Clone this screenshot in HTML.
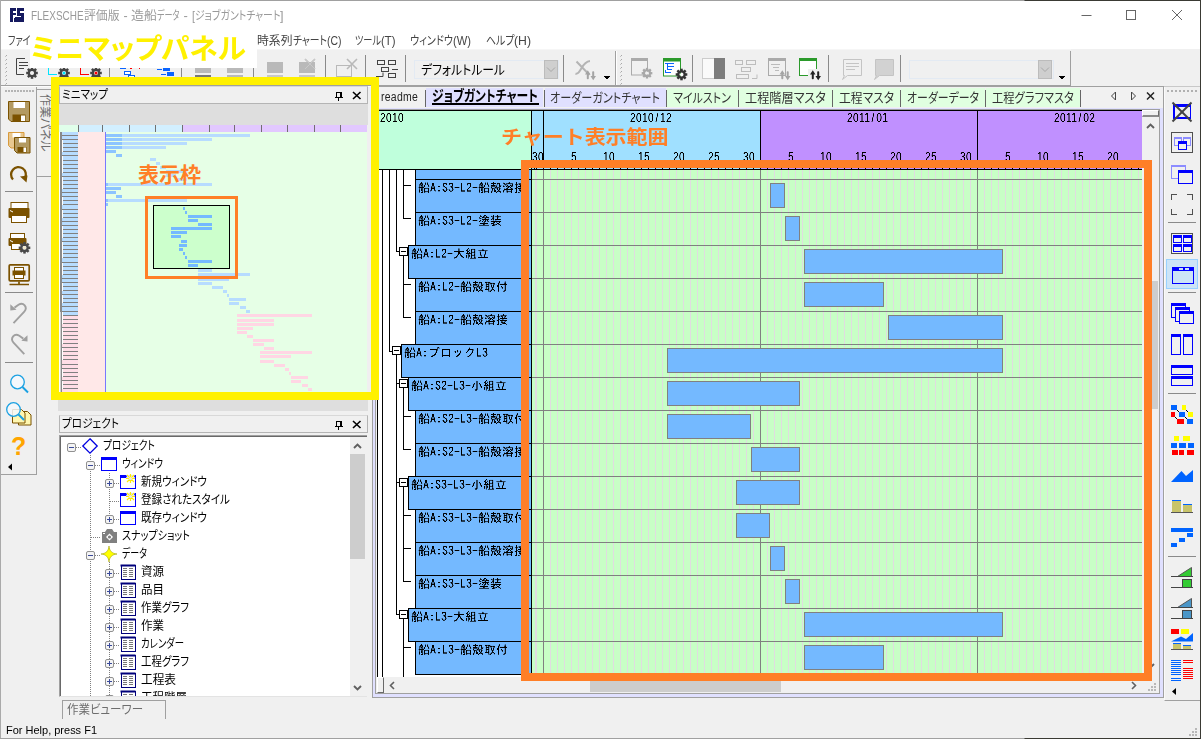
<!DOCTYPE html>
<html lang="ja"><head><meta charset="utf-8"><title>FLEXSCHE</title>
<style>
html,body{margin:0;padding:0;}
body{width:1201px;height:739px;overflow:hidden;background:#f0f0f0;position:relative;font-family:"Liberation Sans","Noto Sans CJK JP",sans-serif;}
#root{position:absolute;left:0;top:0;width:1201px;height:739px;overflow:hidden;}
#root div,#root span,#root svg{position:absolute;}
#root svg{overflow:visible;}
.t{white-space:nowrap;transform-origin:0 0;font-family:"Liberation Sans","Noto Sans CJK JP",sans-serif;font-feature-settings:"palt";}
.m{white-space:nowrap;font-family:"IPAGothic","Liberation Mono",monospace;font-size:12px;line-height:12px;}
#root .m .hw{position:static;}
#root .r{position:static;display:inline-block;transform-origin:0 0;white-space:pre;vertical-align:top;}
.d{white-space:nowrap;font-family:"Liberation Sans",sans-serif;font-size:12px;line-height:13px;letter-spacing:.39px;transform:scaleX(.85);transform-origin:0 0;color:#000;}
#root .d .sl{position:static;padding:0 1.600px;}
.fr{position:absolute;pointer-events:none;}
</style></head>
<body><svg width="0" height="0" style="position:absolute"><filter id="c1" color-interpolation-filters="sRGB"><feComponentTransfer><feFuncA type="linear" slope="2.600" intercept="-0.600"/></feComponentTransfer></filter><filter id="c2" color-interpolation-filters="sRGB"><feComponentTransfer><feFuncA type="linear" slope="2.400" intercept="-0.550"/></feComponentTransfer></filter></svg><div id="root">
<div style="left:0px;top:0px;width:1201px;height:49px;background:#fff;"></div>
<svg style="left:10px;top:8px" width="14" height="14" viewBox="0 0 14 14" shape-rendering="crispEdges">
<rect x="0" y="0" width="14" height="14" fill="#15195f"/>
<rect x="6" y="0" width="1" height="9" fill="#fff"/>
<rect x="3" y="3" width="3" height="2" fill="#fff"/>
<rect x="3" y="7" width="3" height="2" fill="#fff"/>
<rect x="3" y="9" width="1" height="5" fill="#fff"/>
<rect x="10" y="3" width="4" height="2" fill="#fff"/>
<rect x="7" y="8" width="4" height="1" fill="#fff"/>
<rect x="4" y="9" width="1" height="1" fill="#fff"/>
</svg>
<span class="t" style="left:31px;top:8px;font-size:12px;line-height:16px;color:#999;white-space:pre;"><span id="title_0" class="r" style="width:52.50px;transform:scaleX(0.829);">FLEXSCHE</span><span id="title_1" class="r" style="width:35.50px;transform:scaleX(0.986);">評価版</span><span id="title_2" class="r" style="margin-left:0.50px;width:11.00px;transform:scaleX(1.031);"> - </span><span id="title_3" class="r" style="width:26.00px;transform:scaleX(1.083);">造船</span><span id="title_4" class="r" style="width:22.50px;transform:scaleX(0.671);">データ</span><span id="title_5" class="r" style="margin-left:0.50px;width:11.50px;transform:scaleX(1.078);"> - </span><span id="title_6" class="r" style="margin-left:0.50px;width:3.00px;transform:scaleX(0.897);">[</span><span id="title_7" class="r" style="width:85.50px;transform:scaleX(0.820);">ジョブガントチャート</span><span id="title_8" class="r" style="width:3.50px;transform:scaleX(1.047);">]</span></span>
<svg style="left:1075px;top:5px" width="120" height="20" viewBox="0 0 120 20">
<path d="M6.5 10.5h10" stroke="#666" stroke-width="1" fill="none"/>
<rect x="51.5" y="5.500" width="9" height="9" stroke="#666" stroke-width="1" fill="none"/>
<path d="M97 5l10 10M107 5l-10 10" stroke="#666" stroke-width="1" fill="none"/>
</svg>
<span class="t" style="left:8px;top:33px;font-size:12px;line-height:16px;color:#444;"><span id="m1_0" class="r" style="width:22.50px;transform:scaleX(0.742);">ファイ</span><span id="m1_1" class="r" style="width:23.50px;transform:scaleX(0.885);">ル(F)</span></span>
<span class="t" style="left:257px;top:33px;font-size:12px;line-height:16px;color:#444;"><span id="m5_0" class="r" style="width:35.50px;transform:scaleX(0.986);">時系列</span><span id="m5_1" class="r" style="width:34.00px;transform:scaleX(0.815);">チャート</span><span id="m5_2" class="r" style="width:14.50px;transform:scaleX(0.870);">(C)</span></span>
<span class="t" style="left:355px;top:33px;font-size:12px;line-height:16px;color:#444;"><span id="m6_0" class="r" style="width:26.00px;transform:scaleX(0.763);">ツール</span><span id="m6_1" class="r" style="width:14.50px;transform:scaleX(0.946);">(T)</span></span>
<span class="t" style="left:410px;top:33px;font-size:12px;line-height:16px;color:#444;"><span id="m7_0" class="r" style="width:43.00px;transform:scaleX(0.842);">ウィンドウ</span><span id="m7_1" class="r" style="width:18.00px;transform:scaleX(0.931);">(W)</span></span>
<span class="t" style="left:485.5px;top:33px;font-size:12px;line-height:16px;color:#444;"><span id="m8_0" class="r" style="width:28.50px;transform:scaleX(0.828);">ヘルプ</span><span id="m8_1" class="r" style="width:17.00px;transform:scaleX(1.020);">(H)</span></span>
<div style="left:0px;top:85px;width:1071px;height:1px;background:#a0a0a0;"></div>
<div style="left:0px;top:86px;width:1201px;height:1px;background:#fbfbfb;"></div>
<div style="left:1071px;top:86px;width:130px;height:1px;background:#c8c8c8;"></div>
<svg style="left:5px;top:55px" width="2" height="30" shape-rendering="crispEdges"><rect x="1" y="0" width="1" height="1" fill="#a8a8a8"/><rect x="0" y="1" width="1" height="1" fill="#c4c4c4"/><rect x="1" y="4" width="1" height="1" fill="#a8a8a8"/><rect x="0" y="5" width="1" height="1" fill="#c4c4c4"/><rect x="1" y="8" width="1" height="1" fill="#a8a8a8"/><rect x="0" y="9" width="1" height="1" fill="#c4c4c4"/><rect x="1" y="12" width="1" height="1" fill="#a8a8a8"/><rect x="0" y="13" width="1" height="1" fill="#c4c4c4"/><rect x="1" y="16" width="1" height="1" fill="#a8a8a8"/><rect x="0" y="17" width="1" height="1" fill="#c4c4c4"/><rect x="1" y="20" width="1" height="1" fill="#a8a8a8"/><rect x="0" y="21" width="1" height="1" fill="#c4c4c4"/><rect x="1" y="24" width="1" height="1" fill="#a8a8a8"/><rect x="0" y="25" width="1" height="1" fill="#c4c4c4"/><rect x="1" y="28" width="1" height="1" fill="#a8a8a8"/><rect x="0" y="29" width="1" height="1" fill="#c4c4c4"/></svg>
<svg style="left:620px;top:55px" width="2" height="30" shape-rendering="crispEdges"><rect x="1" y="0" width="1" height="1" fill="#a8a8a8"/><rect x="0" y="1" width="1" height="1" fill="#c4c4c4"/><rect x="1" y="4" width="1" height="1" fill="#a8a8a8"/><rect x="0" y="5" width="1" height="1" fill="#c4c4c4"/><rect x="1" y="8" width="1" height="1" fill="#a8a8a8"/><rect x="0" y="9" width="1" height="1" fill="#c4c4c4"/><rect x="1" y="12" width="1" height="1" fill="#a8a8a8"/><rect x="0" y="13" width="1" height="1" fill="#c4c4c4"/><rect x="1" y="16" width="1" height="1" fill="#a8a8a8"/><rect x="0" y="17" width="1" height="1" fill="#c4c4c4"/><rect x="1" y="20" width="1" height="1" fill="#a8a8a8"/><rect x="0" y="21" width="1" height="1" fill="#c4c4c4"/><rect x="1" y="24" width="1" height="1" fill="#a8a8a8"/><rect x="0" y="25" width="1" height="1" fill="#c4c4c4"/><rect x="1" y="28" width="1" height="1" fill="#a8a8a8"/><rect x="0" y="29" width="1" height="1" fill="#c4c4c4"/></svg>
<div style="left:109px;top:55px;width:1px;height:27px;background:#8a8a8a;"></div>
<div style="left:181px;top:55px;width:1px;height:27px;background:#8a8a8a;"></div>
<div style="left:253px;top:55px;width:1px;height:27px;background:#8a8a8a;"></div>
<div style="left:325px;top:55px;width:1px;height:27px;background:#8a8a8a;"></div>
<div style="left:365px;top:55px;width:1px;height:27px;background:#8a8a8a;"></div>
<div style="left:405px;top:55px;width:1px;height:27px;background:#8a8a8a;"></div>
<div style="left:563px;top:55px;width:1px;height:27px;background:#8a8a8a;"></div>
<div style="left:692px;top:55px;width:1px;height:27px;background:#8a8a8a;"></div>
<div style="left:828px;top:55px;width:1px;height:27px;background:#8a8a8a;"></div>
<div style="left:900px;top:55px;width:1px;height:27px;background:#8a8a8a;"></div>
<div style="left:615px;top:51px;width:1px;height:34px;background:#a0a0a0;"></div>
<div style="left:616px;top:51px;width:1px;height:34px;background:#fff;"></div>
<div style="left:1070px;top:51px;width:1px;height:35px;background:#a0a0a0;"></div>
<div style="left:1px;top:49px;width:1070px;height:1px;background:#f6f6f6;"></div>
<div style="left:414px;top:60px;width:145px;height:19px;background:#f0f0f0;border:1px solid #e3eaf3;box-sizing:border-box;"></div>
<span id="combo" class="t" style="left:421px;top:61px;font-size:13px;line-height:17px;color:#000;transform:scaleX(0.908);">デフォルトルール</span>
<div style="left:544px;top:60px;width:14px;height:19px;background:#cfcfcf;border:1px solid #bcbcbc;box-sizing:border-box;"></div>
<svg style="left:546px;top:66px" width="10" height="7" viewBox="0 0 10 7"><path d="M1 1.500l4 4 4-4" stroke="#a8a8a8" stroke-width="1" fill="none"/></svg>
<div style="left:909px;top:60px;width:145px;height:19px;background:#f0f0f0;border:1px solid #e3eaf3;box-sizing:border-box;"></div>
<div style="left:1038px;top:60px;width:14px;height:19px;background:#cfcfcf;border:1px solid #bcbcbc;box-sizing:border-box;"></div>
<svg style="left:1040px;top:66px" width="10" height="7" viewBox="0 0 10 7"><path d="M1 1.500l4 4 4-4" stroke="#a8a8a8" stroke-width="1" fill="none"/></svg>
<svg style="left:604px;top:76px" width="7" height="4" viewBox="0 0 7 4" shape-rendering="crispEdges"><path d="M0 0h6v1H0zM1 1h4v1H1zM2 2h2v1H2z" fill="#000"/></svg>
<svg style="left:1059px;top:76px" width="7" height="4" viewBox="0 0 7 4" shape-rendering="crispEdges"><path d="M0 0h6v1H0zM1 1h4v1H1zM2 2h2v1H2z" fill="#000"/></svg>
<svg style="left:14px;top:56px" width="26" height="24" viewBox="0 0 26 24"><path d="M11 2.500H2.500v16H10" stroke="#444" fill="none"/><path d="M5 6.500h9M5 9.500h9M5 12.500h5" stroke="#444" fill="none"/><g transform="translate(18,17) scale(1.0)" shape-rendering="geometricPrecision"><rect x="-1.250" y="-5.800" width="2.500" height="3" transform="rotate(0)" fill="#444"/><rect x="-1.250" y="-5.800" width="2.500" height="3" transform="rotate(45)" fill="#444"/><rect x="-1.250" y="-5.800" width="2.500" height="3" transform="rotate(90)" fill="#444"/><rect x="-1.250" y="-5.800" width="2.500" height="3" transform="rotate(135)" fill="#444"/><rect x="-1.250" y="-5.800" width="2.500" height="3" transform="rotate(180)" fill="#444"/><rect x="-1.250" y="-5.800" width="2.500" height="3" transform="rotate(225)" fill="#444"/><rect x="-1.250" y="-5.800" width="2.500" height="3" transform="rotate(270)" fill="#444"/><rect x="-1.250" y="-5.800" width="2.500" height="3" transform="rotate(315)" fill="#444"/><circle r="3.200" fill="none" stroke="#444" stroke-width="2.300"/><circle r="1.500" fill="#f0f0f0"/></g></svg>
<svg style="left:46px;top:56px" width="26" height="24" viewBox="0 0 26 24"><path d="M2.500 8v10.500H11" stroke="#00e5ff" fill="none" stroke-linejoin="miter" shape-rendering="crispEdges"/><g transform="translate(18,17) scale(1.0)" shape-rendering="geometricPrecision"><rect x="-1.250" y="-5.800" width="2.500" height="3" transform="rotate(0)" fill="#444"/><rect x="-1.250" y="-5.800" width="2.500" height="3" transform="rotate(45)" fill="#444"/><rect x="-1.250" y="-5.800" width="2.500" height="3" transform="rotate(90)" fill="#444"/><rect x="-1.250" y="-5.800" width="2.500" height="3" transform="rotate(135)" fill="#444"/><rect x="-1.250" y="-5.800" width="2.500" height="3" transform="rotate(180)" fill="#444"/><rect x="-1.250" y="-5.800" width="2.500" height="3" transform="rotate(225)" fill="#444"/><rect x="-1.250" y="-5.800" width="2.500" height="3" transform="rotate(270)" fill="#444"/><rect x="-1.250" y="-5.800" width="2.500" height="3" transform="rotate(315)" fill="#444"/><circle r="3.200" fill="none" stroke="#444" stroke-width="2.300"/><circle r="1.500" fill="#00e5ff"/></g></svg>
<svg style="left:78px;top:56px" width="26" height="24" viewBox="0 0 26 24"><path d="M2.500 8v10.500H11" stroke="#f00" fill="none" stroke-linejoin="miter" shape-rendering="crispEdges"/><g transform="translate(18,17) scale(1.0)" shape-rendering="geometricPrecision"><rect x="-1.250" y="-5.800" width="2.500" height="3" transform="rotate(0)" fill="#444"/><rect x="-1.250" y="-5.800" width="2.500" height="3" transform="rotate(45)" fill="#444"/><rect x="-1.250" y="-5.800" width="2.500" height="3" transform="rotate(90)" fill="#444"/><rect x="-1.250" y="-5.800" width="2.500" height="3" transform="rotate(135)" fill="#444"/><rect x="-1.250" y="-5.800" width="2.500" height="3" transform="rotate(180)" fill="#444"/><rect x="-1.250" y="-5.800" width="2.500" height="3" transform="rotate(225)" fill="#444"/><rect x="-1.250" y="-5.800" width="2.500" height="3" transform="rotate(270)" fill="#444"/><rect x="-1.250" y="-5.800" width="2.500" height="3" transform="rotate(315)" fill="#444"/><circle r="3.200" fill="none" stroke="#444" stroke-width="2.300"/><circle r="1.500" fill="#f00"/></g></svg>
<svg style="left:118px;top:64px" width="22" height="16" viewBox="0 0 22 16"><path d="M2 4.500h6" stroke="#0a64ff"/><rect x="6.500" y="7.500" width="6" height="3" fill="#fff" stroke="#0a64ff"/><rect x="10.500" y="11.500" width="6" height="4" fill="#fff" stroke="#0a64ff"/><rect x="12" y="4" width="2" height="1" fill="#f00"/><rect x="21" y="4" width="1" height="1" fill="#f00"/></svg>
<svg style="left:156px;top:64px" width="22" height="16" viewBox="0 0 22 16"><path d="M1 5.500h5M5 10.500h5" stroke="#0a64ff"/><rect x="7" y="4" width="7" height="3" fill="#0a64ff"/><rect x="11" y="8" width="7" height="4" fill="#0a64ff"/></svg>
<div style="left:195px;top:68px;width:16px;height:5px;background:#b9b9b9;"></div>
<div style="left:195px;top:75px;width:16px;height:3px;background:#777;"></div>
<div style="left:227px;top:68px;width:16px;height:5px;background:#b9b9b9;"></div>
<div style="left:227px;top:75px;width:16px;height:3px;background:#b9b9b9;"></div>
<svg style="left:262px;top:56px" width="26" height="24" viewBox="0 0 26 24"><rect x="5" y="6" width="16" height="11" fill="#b9b9b9"/><rect x="5" y="19" width="16" height="2" fill="#c8c8c8"/></svg>
<svg style="left:294px;top:56px" width="28" height="24" viewBox="0 0 28 24"><rect x="5" y="6" width="16" height="11" fill="#b9b9b9"/><rect x="5" y="19" width="16" height="2" fill="#c8c8c8"/><path d="M11 3l10 10M21 3L11 13" stroke="#b9b9b9" stroke-width="1.600" fill="none"/><path d="M11 3l10 10M21 3L11 13" stroke="#f0f0f0" stroke-width=".3" fill="none"/></svg>
<svg style="left:332px;top:56px" width="28" height="24" viewBox="0 0 28 24"><rect x="4.500" y="9.500" width="15" height="11" fill="#f0f0f0" stroke="#b9b9b9"/><path d="M15 3l10 10M25 3L15 13" stroke="#b9b9b9" stroke-width="1.600" fill="none"/></svg>
<svg style="left:375px;top:58px" width="24" height="22" viewBox="0 0 24 22"><g fill="none" stroke="#444"><rect x="2.500" y="2.500" width="7" height="4"/><rect x="13.500" y="2.500" width="7" height="4"/><rect x="6.500" y="9.500" width="7" height="4"/><rect x="13.500" y="15.500" width="7" height="4"/><path d="M1 18.500h7v-4M17 11.500h6"/></g></svg>
<svg style="left:574px;top:58px" width="32" height="24" viewBox="0 0 32 24"><g fill="none" stroke="#b4b4b4" stroke-width="2"><path d="M2.500 3.500l13 13.500M1.500 15.500c2 1 3.500-1 5.500-4.500s4-7.500 9-8"/></g><g transform="translate(16.5,17)" fill="#a4a4a4"><path d="M-5.500 -.5L-2.700 -4.800 0 -.5H-1.700V3.500C-1.700 4.500-3.700 4.500-3.700 3.500V-.5z"/><path d="M5.500 1L2.700 5.300 0 1H1.700V-3C1.700-4 3.700-4 3.700-3V1z"/></g></svg>
<svg style="left:629px;top:56px" width="28" height="26" viewBox="0 0 28 26"><rect x="2.500" y="2.500" width="16" height="16.500" fill="#f0f0f0" stroke="#aaa"/><rect x="2" y="2" width="17" height="3" fill="#aaa"/><g transform="translate(18,17.2) scale(0.92)" shape-rendering="geometricPrecision"><rect x="-1.250" y="-5.800" width="2.500" height="3" transform="rotate(0)" fill="#a8a8a8"/><rect x="-1.250" y="-5.800" width="2.500" height="3" transform="rotate(45)" fill="#a8a8a8"/><rect x="-1.250" y="-5.800" width="2.500" height="3" transform="rotate(90)" fill="#a8a8a8"/><rect x="-1.250" y="-5.800" width="2.500" height="3" transform="rotate(135)" fill="#a8a8a8"/><rect x="-1.250" y="-5.800" width="2.500" height="3" transform="rotate(180)" fill="#a8a8a8"/><rect x="-1.250" y="-5.800" width="2.500" height="3" transform="rotate(225)" fill="#a8a8a8"/><rect x="-1.250" y="-5.800" width="2.500" height="3" transform="rotate(270)" fill="#a8a8a8"/><rect x="-1.250" y="-5.800" width="2.500" height="3" transform="rotate(315)" fill="#a8a8a8"/><circle r="3.200" fill="none" stroke="#a8a8a8" stroke-width="2.300"/><circle r="1.500" fill="#f0f0f0"/></g></svg>
<svg style="left:661px;top:56px" width="28" height="26" viewBox="0 0 28 26"><rect x="2.500" y="2.500" width="17" height="17.500" fill="#fff" stroke="#2b9a2b"/><rect x="2" y="2" width="18" height="3.500" fill="#2b9a2b"/><path d="M4 7.500h9M7 10.500h6M7 13.500h4M4 16.500h6M6.500 8v6M4.500 13.500v3" stroke="#0a64ff" fill="none" shape-rendering="crispEdges"/><g transform="translate(20.5,18.5) scale(1.0)" shape-rendering="geometricPrecision"><rect x="-1.250" y="-5.800" width="2.500" height="3" transform="rotate(0)" fill="#333"/><rect x="-1.250" y="-5.800" width="2.500" height="3" transform="rotate(45)" fill="#333"/><rect x="-1.250" y="-5.800" width="2.500" height="3" transform="rotate(90)" fill="#333"/><rect x="-1.250" y="-5.800" width="2.500" height="3" transform="rotate(135)" fill="#333"/><rect x="-1.250" y="-5.800" width="2.500" height="3" transform="rotate(180)" fill="#333"/><rect x="-1.250" y="-5.800" width="2.500" height="3" transform="rotate(225)" fill="#333"/><rect x="-1.250" y="-5.800" width="2.500" height="3" transform="rotate(270)" fill="#333"/><rect x="-1.250" y="-5.800" width="2.500" height="3" transform="rotate(315)" fill="#333"/><circle r="3.200" fill="none" stroke="#333" stroke-width="2.300"/><circle r="1.500" fill="#fff"/></g></svg>
<svg style="left:700px;top:56px" width="28" height="26" viewBox="0 0 28 26"><rect x="2.500" y="2.500" width="22" height="20" fill="#fafafa" stroke="#ccc"/><rect x="14" y="2" width="11" height="21" fill="#7d7d7d"/></svg>
<svg style="left:733px;top:58px" width="28" height="22" viewBox="0 0 28 22"><g fill="none" stroke="#bdbdbd"><rect x="2.500" y="2.500" width="7" height="4"/><rect x="13.500" y="2.500" width="9" height="4"/><rect x="8.500" y="9.500" width="9" height="4"/><rect x="3.500" y="16.500" width="12" height="4"/><path d="M19 20.500h5v-4"/></g></svg>
<svg style="left:765px;top:56px" width="32" height="26" viewBox="0 0 32 26"><rect x="3.500" y="3.500" width="17" height="16" fill="#f0f0f0" stroke="#aaa"/><rect x="3" y="2" width="18" height="3" fill="#aaa"/><path d="M6 8.500h9M8 11.500h6M10 14.500h4" stroke="#bbb" fill="none"/><g transform="translate(20,19)" fill="#a4a4a4"><path d="M-5.500 -.5L-2.700 -4.800 0 -.5H-1.700V3.500C-1.700 4.500-3.700 4.500-3.700 3.500V-.5z"/><path d="M5.500 1L2.700 5.300 0 1H1.700V-3C1.700-4 3.700-4 3.700-3V1z"/></g></svg>
<svg style="left:797px;top:56px" width="28" height="26" viewBox="0 0 28 26"><rect x="2.500" y="3.500" width="17" height="16" fill="#fff" stroke="#2b9a2b"/><rect x="2" y="2" width="18" height="3" fill="#2b9a2b"/><rect x="11" y="13" width="12" height="11" fill="#f0f0f0"/><g transform="translate(18.5,19)" fill="#222"><path d="M-5.500 -.5L-2.700 -4.800 0 -.5H-1.700V3.500C-1.700 4.500-3.700 4.500-3.700 3.500V-.5z"/><path d="M5.500 1L2.700 5.300 0 1H1.700V-3C1.700-4 3.700-4 3.700-3V1z"/></g></svg>
<svg style="left:838px;top:56px" width="26" height="26" viewBox="0 0 26 26"><path d="M5.500 3.500h18v16h-14l-5 4 2-4h-1z" fill="#f0f0f0" stroke="#c4c4c4"/><path d="M8 7.500h13M8 10.500h13M8 13.500h9" stroke="#c4c4c4"/></svg>
<svg style="left:870px;top:56px" width="26" height="26" viewBox="0 0 26 26"><path d="M5.500 3.500h18v16h-14l-5 4 2-4h-1z" fill="#d2d2d2" stroke="#c4c4c4"/></svg>
<div style="left:1px;top:87px;width:36px;height:388px;background:#f0f0f0;border-right:1px solid #a0a0a0;border-bottom:1px solid #a0a0a0;box-sizing:border-box;"></div>
<svg style="left:5px;top:90px" width="30" height="2" shape-rendering="crispEdges"><rect x="0" y="0" width="2" height="2" fill="#b4b4b4"/><rect x="3" y="0" width="2" height="2" fill="#b4b4b4"/><rect x="6" y="0" width="2" height="2" fill="#b4b4b4"/><rect x="9" y="0" width="2" height="2" fill="#b4b4b4"/><rect x="12" y="0" width="2" height="2" fill="#b4b4b4"/><rect x="15" y="0" width="2" height="2" fill="#b4b4b4"/><rect x="18" y="0" width="2" height="2" fill="#b4b4b4"/><rect x="21" y="0" width="2" height="2" fill="#b4b4b4"/><rect x="24" y="0" width="2" height="2" fill="#b4b4b4"/><rect x="27" y="0" width="2" height="2" fill="#b4b4b4"/></svg>
<svg style="left:0px;top:87px" width="37" height="390" viewBox="0 0 37 390"><g transform="translate(0,-87)">
<path d="M8.500 101.500h21v20H11l-2.500-2.500z" fill="#b39a62" stroke="#7b5200"/>
<rect x="13.500" y="102" width="11.500" height="6" fill="#fff"/>
<rect x="12.500" y="114.500" width="13" height="7" fill="#7b5200"/>
<rect x="21" y="115.500" width="4" height="5.500" fill="#fff"/>
<path d="M8.500 132.500h15.500v15.500H11l-2.500-2.500z" fill="#e8c890" stroke="#d89a3c"/>
<rect x="12.500" y="133" width="8" height="4.500" fill="#fff"/>
<path d="M14.500 137.500h15.500v15.500H17l-2.500-2.500z" fill="#b39a62" stroke="#7b5200"/>
<rect x="19" y="138" width="7" height="4.500" fill="#fff"/>
<rect x="17.500" y="147" width="9" height="5.500" fill="#7b5200"/>
<rect x="23.500" y="147.500" width="2.500" height="4.500" fill="#fff"/>
<path d="M13 179.500A7.400 7.400 0 1 1 25 178" fill="none" stroke="#7b5200" stroke-width="2.300"/>
<path d="M20 176.500l7.500-1-1 7z" fill="#7b5200"/>
<rect x="11" y="202.500" width="17" height="7" fill="#fff" stroke="#7b5200"/>
<rect x="8.500" y="208" width="21" height="10" rx="1" fill="#7b5200"/>
<path d="M10 210.500l3 1.500" stroke="#fff"/>
<rect x="11.500" y="215.500" width="15" height="7" fill="#fff" stroke="#7b5200"/>
<rect x="10.500" y="233.500" width="14" height="6" fill="#fff" stroke="#7b5200"/>
<rect x="8.500" y="238" width="18" height="8" rx="1" fill="#7b5200"/>
<path d="M10 240.500l3 1.500" stroke="#fff"/>
<rect x="11.500" y="243.500" width="10" height="6" fill="#fff" stroke="#7b5200"/>
<g transform="translate(24.5,247.8) scale(1.0)" shape-rendering="geometricPrecision"><rect x="-1.250" y="-5.800" width="2.500" height="3" transform="rotate(0)" fill="#4a4a4a"/><rect x="-1.250" y="-5.800" width="2.500" height="3" transform="rotate(45)" fill="#4a4a4a"/><rect x="-1.250" y="-5.800" width="2.500" height="3" transform="rotate(90)" fill="#4a4a4a"/><rect x="-1.250" y="-5.800" width="2.500" height="3" transform="rotate(135)" fill="#4a4a4a"/><rect x="-1.250" y="-5.800" width="2.500" height="3" transform="rotate(180)" fill="#4a4a4a"/><rect x="-1.250" y="-5.800" width="2.500" height="3" transform="rotate(225)" fill="#4a4a4a"/><rect x="-1.250" y="-5.800" width="2.500" height="3" transform="rotate(270)" fill="#4a4a4a"/><rect x="-1.250" y="-5.800" width="2.500" height="3" transform="rotate(315)" fill="#4a4a4a"/><circle r="3.200" fill="none" stroke="#4a4a4a" stroke-width="2.300"/><circle r="1.500" fill="#f0e8c8"/></g>
<rect x="9.200" y="264.800" width="20" height="16" rx="1" fill="#f0f0f0" stroke="#7b5200" stroke-width="1.700"/>
<rect x="14.500" y="267.500" width="9" height="4" fill="#fff" stroke="#7b5200"/>
<rect x="12.500" y="270.500" width="13" height="5" fill="#7b5200"/>
<rect x="14.500" y="274.500" width="9" height="4" fill="#fff" stroke="#7b5200"/>
<path d="M19 281.500v3M9.500 284.500h19.500" stroke="#7b5200" stroke-width="1.700"/>
<path d="M13.500 323.200L24.300 311.600C28 307.500 23.500 301.500 18.500 304.800L14.500 307.600" fill="none" stroke="#a0a0a0" stroke-width="1.900"/>
<path d="M10.300 304.200l6.200 5.600-6.200.8z" fill="#a0a0a0"/>
<path d="M24.300 354.200L13.500 342.600C9.800 338.500 14.300 332.500 19.300 335.800L23.300 338.600" fill="none" stroke="#a0a0a0" stroke-width="1.900"/>
<path d="M27.500 335.200l-6.200 5.600 6.200.8z" fill="#a0a0a0"/>
<circle cx="17.500" cy="382" r="6.800" fill="#f4f8fc" stroke="#1ba1e2" stroke-width="1.300"/>
<path d="M22.500 387l5.500 5.500" stroke="#1ba1e2" stroke-width="1.900"/>
<path d="M18.500 411.500h9l3.500 3.500v10h-12.500z" fill="#fff7b0" stroke="#7b5200"/>
<path d="M12.500 409.500h9l3.500 3.500v10h-12.500z" fill="#fff7b0" stroke="#7b5200"/>
<circle cx="13.500" cy="409.500" r="6.800" fill="#f4f8fc" fill-opacity=".85" stroke="#1ba1e2" stroke-width="1.300"/>
<path d="M18.500 414.500l5.500 5.500" stroke="#1ba1e2" stroke-width="1.900"/>
<path d="M12 470.500v-7l-4 3.500z" fill="#000"/>
</g></svg>
<div style="left:5px;top:191px;width:28px;height:1px;background:#8a8a8a;"></div>
<div style="left:5px;top:292px;width:28px;height:1px;background:#8a8a8a;"></div>
<div style="left:5px;top:362px;width:28px;height:1px;background:#8a8a8a;"></div>
<span class="t" style="left:11px;top:433px;font-size:25px;line-height:26px;font-weight:bold;color:#ffa500;font-family:'Liberation Sans',sans-serif;">?</span>
<div style="left:37px;top:89px;width:15px;height:88px;background:#f0f0f0;border-right:1px solid #a0a0a0;border-bottom:1px solid #a0a0a0;border-top:1px solid #a0a0a0;box-sizing:border-box;"></div>
<span class="t" id="vtab" style="left:53px;top:94px;font-size:12px;line-height:16px;color:#6d6d6d;transform-origin:0 0;transform:rotate(90deg);letter-spacing:-0.100px;">作業パネル</span>
<div style="left:59px;top:86px;width:309px;height:18px;background:#f0f0f0;border:1px solid #b4b4b4;border-top-color:#d8d8d8;box-sizing:border-box;"></div>
<span id="mmtitle" class="t" style="left:62px;top:87px;font-size:12px;line-height:16px;color:#000;transform:scaleX(0.881);">ミニマップ</span>
<svg style="left:334px;top:91px" width="10" height="10" viewBox="0 0 10 10" shape-rendering="crispEdges"><path d="M2.500 1v5M2 1.500h5M6 1v5M7 1v5M1 6.500h8M4.500 7v3" stroke="#000" fill="none"/></svg>
<svg style="left:352px;top:91px" width="10" height="9" viewBox="0 0 10 9"><path d="M1 1l7.500 7M8.500 1L1 8" stroke="#000" stroke-width="1.600" fill="none"/></svg>
<div style="left:59px;top:104px;width:309px;height:21px;background:#dedede;"></div>
<div style="left:59px;top:125px;width:20px;height:7px;background:#e0ffea;"></div>
<div style="left:79px;top:125px;width:104px;height:7px;background:#d2efff;"></div>
<div style="left:183px;top:125px;width:184px;height:7px;background:#e2c8ff;"></div>
<div style="left:78px;top:125px;width:1px;height:7px;background:#707070;"></div>
<div style="left:102px;top:125px;width:1px;height:7px;background:#707070;"></div>
<div style="left:129px;top:125px;width:1px;height:7px;background:#707070;"></div>
<div style="left:155px;top:125px;width:1px;height:7px;background:#707070;"></div>
<div style="left:182px;top:125px;width:1px;height:7px;background:#707070;"></div>
<div style="left:209px;top:125px;width:1px;height:7px;background:#707070;"></div>
<div style="left:234px;top:125px;width:1px;height:7px;background:#707070;"></div>
<div style="left:261px;top:125px;width:1px;height:7px;background:#707070;"></div>
<div style="left:287px;top:125px;width:1px;height:7px;background:#707070;"></div>
<div style="left:314px;top:125px;width:1px;height:7px;background:#707070;"></div>
<div style="left:340px;top:125px;width:1px;height:7px;background:#707070;"></div>
<div style="left:59px;top:132px;width:308px;height:260px;background:#e6ffe6;"></div>
<div style="left:78px;top:132px;width:27px;height:260px;background:#ffe8e8;"></div>
<div style="left:105px;top:132px;width:1px;height:260px;background:#7878ff;"></div>
<svg style="left:59px;top:132px" width="19" height="260" shape-rendering="crispEdges"><rect width="19" height="260" fill="#fff"/><rect x="2" y="0" width="17" height="4" fill="#b7dcff"/><rect x="2" y="3" width="17" height="1" fill="#808080"/><rect x="3" y="4" width="16" height="4" fill="#b7dcff"/><rect x="3" y="7" width="16" height="1" fill="#808080"/><rect x="4" y="8" width="15" height="4" fill="#b7dcff"/><rect x="4" y="11" width="15" height="1" fill="#808080"/><rect x="4" y="12" width="15" height="4" fill="#b7dcff"/><rect x="4" y="15" width="15" height="1" fill="#808080"/><rect x="4" y="16" width="15" height="4" fill="#b7dcff"/><rect x="4" y="19" width="15" height="1" fill="#808080"/><rect x="3" y="20" width="16" height="4" fill="#b7dcff"/><rect x="3" y="23" width="16" height="1" fill="#808080"/><rect x="4" y="24" width="15" height="5" fill="#b7dcff"/><rect x="4" y="28" width="15" height="1" fill="#808080"/><rect x="4" y="29" width="15" height="4" fill="#b7dcff"/><rect x="4" y="32" width="15" height="1" fill="#808080"/><rect x="4" y="33" width="15" height="4" fill="#b7dcff"/><rect x="4" y="36" width="15" height="1" fill="#808080"/><rect x="4" y="37" width="15" height="4" fill="#b7dcff"/><rect x="4" y="40" width="15" height="1" fill="#808080"/><rect x="3" y="41" width="16" height="4" fill="#b7dcff"/><rect x="3" y="44" width="16" height="1" fill="#808080"/><rect x="4" y="45" width="15" height="4" fill="#b7dcff"/><rect x="4" y="48" width="15" height="1" fill="#808080"/><rect x="4" y="49" width="15" height="4" fill="#b7dcff"/><rect x="4" y="52" width="15" height="1" fill="#808080"/><rect x="4" y="53" width="15" height="4" fill="#b7dcff"/><rect x="4" y="56" width="15" height="1" fill="#808080"/><rect x="2" y="57" width="17" height="4" fill="#b7dcff"/><rect x="2" y="60" width="17" height="1" fill="#808080"/><rect x="3" y="61" width="16" height="4" fill="#b7dcff"/><rect x="3" y="64" width="16" height="1" fill="#808080"/><rect x="4" y="65" width="15" height="4" fill="#b7dcff"/><rect x="4" y="68" width="15" height="1" fill="#808080"/><rect x="4" y="69" width="15" height="4" fill="#b7dcff"/><rect x="4" y="72" width="15" height="1" fill="#808080"/><rect x="3" y="73" width="16" height="5" fill="#b7dcff"/><rect x="3" y="77" width="16" height="1" fill="#808080"/><rect x="4" y="78" width="15" height="4" fill="#b7dcff"/><rect x="4" y="81" width="15" height="1" fill="#808080"/><rect x="4" y="82" width="15" height="4" fill="#b7dcff"/><rect x="4" y="85" width="15" height="1" fill="#808080"/><rect x="2" y="86" width="17" height="4" fill="#b7dcff"/><rect x="2" y="89" width="17" height="1" fill="#808080"/><rect x="3" y="90" width="16" height="4" fill="#b7dcff"/><rect x="3" y="93" width="16" height="1" fill="#808080"/><rect x="4" y="94" width="15" height="4" fill="#b7dcff"/><rect x="4" y="97" width="15" height="1" fill="#808080"/><rect x="4" y="98" width="15" height="4" fill="#b7dcff"/><rect x="4" y="101" width="15" height="1" fill="#808080"/><rect x="4" y="102" width="15" height="4" fill="#b7dcff"/><rect x="4" y="105" width="15" height="1" fill="#808080"/><rect x="3" y="106" width="16" height="4" fill="#b7dcff"/><rect x="3" y="109" width="16" height="1" fill="#808080"/><rect x="4" y="110" width="15" height="4" fill="#b7dcff"/><rect x="4" y="113" width="15" height="1" fill="#808080"/><rect x="4" y="114" width="15" height="4" fill="#b7dcff"/><rect x="4" y="117" width="15" height="1" fill="#808080"/><rect x="4" y="118" width="15" height="4" fill="#b7dcff"/><rect x="4" y="121" width="15" height="1" fill="#808080"/><rect x="4" y="122" width="15" height="4" fill="#b7dcff"/><rect x="4" y="125" width="15" height="1" fill="#808080"/><rect x="3" y="126" width="16" height="5" fill="#b7dcff"/><rect x="3" y="130" width="16" height="1" fill="#808080"/><rect x="4" y="131" width="15" height="4" fill="#b7dcff"/><rect x="4" y="134" width="15" height="1" fill="#808080"/><rect x="4" y="135" width="15" height="4" fill="#b7dcff"/><rect x="4" y="138" width="15" height="1" fill="#808080"/><rect x="4" y="139" width="15" height="4" fill="#b7dcff"/><rect x="4" y="142" width="15" height="1" fill="#808080"/><rect x="2" y="143" width="17" height="4" fill="#b7dcff"/><rect x="2" y="146" width="17" height="1" fill="#808080"/><rect x="3" y="147" width="16" height="4" fill="#b7dcff"/><rect x="3" y="150" width="16" height="1" fill="#808080"/><rect x="4" y="151" width="15" height="4" fill="#b7dcff"/><rect x="4" y="154" width="15" height="1" fill="#808080"/><rect x="4" y="155" width="15" height="4" fill="#b7dcff"/><rect x="4" y="158" width="15" height="1" fill="#808080"/><rect x="3" y="159" width="16" height="4" fill="#b7dcff"/><rect x="3" y="162" width="16" height="1" fill="#808080"/><rect x="4" y="163" width="15" height="4" fill="#b7dcff"/><rect x="4" y="166" width="15" height="1" fill="#808080"/><rect x="4" y="167" width="15" height="4" fill="#b7dcff"/><rect x="4" y="170" width="15" height="1" fill="#808080"/><rect x="2" y="171" width="17" height="4" fill="#b7dcff"/><rect x="2" y="174" width="17" height="1" fill="#808080"/><rect x="3" y="175" width="16" height="5" fill="#b7dcff"/><rect x="3" y="179" width="16" height="1" fill="#808080"/><rect x="4" y="180" width="15" height="4" fill="#b7dcff"/><rect x="4" y="183" width="15" height="1" fill="#808080"/><rect x="4" y="184" width="15" height="4" fill="#ffdde6"/><rect x="4" y="187" width="15" height="1" fill="#808080"/><rect x="4" y="188" width="15" height="4" fill="#ffdde6"/><rect x="4" y="191" width="15" height="1" fill="#808080"/><rect x="3" y="192" width="16" height="4" fill="#ffdde6"/><rect x="3" y="195" width="16" height="1" fill="#808080"/><rect x="4" y="196" width="15" height="4" fill="#ffdde6"/><rect x="4" y="199" width="15" height="1" fill="#808080"/><rect x="4" y="200" width="15" height="4" fill="#ffdde6"/><rect x="4" y="203" width="15" height="1" fill="#808080"/><rect x="4" y="204" width="15" height="4" fill="#ffdde6"/><rect x="4" y="207" width="15" height="1" fill="#808080"/><rect x="4" y="208" width="15" height="4" fill="#ffdde6"/><rect x="4" y="211" width="15" height="1" fill="#808080"/><rect x="3" y="212" width="16" height="4" fill="#ffdde6"/><rect x="3" y="215" width="16" height="1" fill="#808080"/><rect x="4" y="216" width="15" height="4" fill="#ffdde6"/><rect x="4" y="219" width="15" height="1" fill="#808080"/><rect x="4" y="220" width="15" height="4" fill="#ffdde6"/><rect x="4" y="223" width="15" height="1" fill="#808080"/><rect x="4" y="224" width="15" height="4" fill="#ffdde6"/><rect x="4" y="227" width="15" height="1" fill="#808080"/><rect x="2" y="228" width="17" height="5" fill="#ffdde6"/><rect x="2" y="232" width="17" height="1" fill="#808080"/><rect x="3" y="233" width="16" height="4" fill="#ffdde6"/><rect x="3" y="236" width="16" height="1" fill="#808080"/><rect x="4" y="237" width="15" height="4" fill="#ffdde6"/><rect x="4" y="240" width="15" height="1" fill="#808080"/><rect x="4" y="241" width="15" height="4" fill="#ffdde6"/><rect x="4" y="244" width="15" height="1" fill="#808080"/><rect x="3" y="245" width="16" height="4" fill="#ffdde6"/><rect x="3" y="248" width="16" height="1" fill="#808080"/><rect x="4" y="249" width="15" height="4" fill="#ffdde6"/><rect x="4" y="252" width="15" height="1" fill="#808080"/><rect x="4" y="253" width="15" height="4" fill="#ffdde6"/><rect x="4" y="256" width="15" height="1" fill="#808080"/><rect x="2" y="257" width="17" height="4" fill="#ffdde6"/><rect x="2" y="260" width="17" height="1" fill="#808080"/><rect x="1" y="0" width="2" height="260" fill="#8a8a8a"/><rect x="0" y="180" width="2" height="80" fill="#fff" opacity=".6"/></svg>
<svg style="left:106px;top:132px" width="261" height="260" shape-rendering="crispEdges"><rect x="0" y="2" width="144" height="3" fill="#b7dcff"/><rect x="0" y="6" width="106" height="3" fill="#b7dcff"/><rect x="0" y="10" width="81" height="3" fill="#b7dcff"/><rect x="0" y="14" width="60" height="3" fill="#b7dcff"/><rect x="0" y="2" width="16" height="3" fill="#8cc4ff"/><rect x="0" y="6" width="16" height="3" fill="#8cc4ff"/><rect x="0" y="10" width="16" height="3" fill="#8cc4ff"/><rect x="0" y="14" width="16" height="3" fill="#8cc4ff"/><rect x="0" y="18" width="10" height="3" fill="#8cc4ff"/><rect x="10" y="22" width="6" height="3" fill="#8cc4ff"/><rect x="44" y="26" width="6" height="3" fill="#b7dcff"/><rect x="50" y="30" width="4" height="3" fill="#b7dcff"/><rect x="54" y="34" width="6" height="3" fill="#b7dcff"/><rect x="60" y="38" width="21" height="3" fill="#b7dcff"/><rect x="60" y="42" width="10" height="3" fill="#b7dcff"/><rect x="70" y="46" width="11" height="3" fill="#b7dcff"/><rect x="0" y="51" width="106" height="3" fill="#b7dcff"/><rect x="0" y="51" width="2" height="3" fill="#8cc4ff"/><rect x="0" y="55" width="15" height="3" fill="#8cc4ff"/><rect x="0" y="59" width="10" height="3" fill="#8cc4ff"/><rect x="10" y="63" width="6" height="3" fill="#8cc4ff"/><rect x="0" y="67" width="81" height="3" fill="#b7dcff"/><rect x="0" y="67" width="2" height="3" fill="#8cc4ff"/><rect x="0" y="71" width="2" height="3" fill="#8cc4ff"/><rect x="92" y="137" width="14" height="3" fill="#b7dcff"/><rect x="92" y="141" width="52" height="3" fill="#b7dcff"/><rect x="92" y="146" width="31" height="3" fill="#b7dcff"/><rect x="92" y="150" width="14" height="3" fill="#b7dcff"/><rect x="106" y="154" width="11" height="3" fill="#b7dcff"/><rect x="117" y="158" width="4" height="3" fill="#b7dcff"/><rect x="121" y="162" width="2" height="3" fill="#b7dcff"/><rect x="123" y="166" width="17" height="3" fill="#b7dcff"/><rect x="123" y="170" width="10" height="3" fill="#b7dcff"/><rect x="134" y="174" width="6" height="3" fill="#b7dcff"/><rect x="140" y="178" width="4" height="3" fill="#b7dcff"/><rect x="131" y="182" width="75" height="3" fill="#ffd6e4"/><rect x="131" y="187" width="37" height="3" fill="#ffd6e4"/><rect x="131" y="191" width="37" height="3" fill="#ffd6e4"/><rect x="131" y="195" width="16" height="3" fill="#ffd6e4"/><rect x="131" y="199" width="10" height="3" fill="#ffd6e4"/><rect x="141" y="203" width="6" height="3" fill="#ffd6e4"/><rect x="147" y="207" width="21" height="3" fill="#ffd6e4"/><rect x="147" y="211" width="11" height="3" fill="#ffd6e4"/><rect x="158" y="215" width="10" height="3" fill="#ffd6e4"/><rect x="154" y="219" width="52" height="3" fill="#ffd6e4"/><rect x="154" y="223" width="31" height="3" fill="#ffd6e4"/><rect x="154" y="228" width="14" height="3" fill="#ffd6e4"/><rect x="168" y="232" width="11" height="3" fill="#ffd6e4"/><rect x="179" y="236" width="4" height="3" fill="#ffd6e4"/><rect x="183" y="240" width="2" height="3" fill="#ffd6e4"/><rect x="185" y="244" width="17" height="3" fill="#ffd6e4"/><rect x="185" y="248" width="10" height="3" fill="#ffd6e4"/><rect x="196" y="252" width="6" height="3" fill="#ffd6e4"/><rect x="202" y="256" width="4" height="3" fill="#ffd6e4"/><rect x="47.500" y="73.500" width="76" height="63" fill="#ccffcc" stroke="#000"/><rect x="77" y="75" width="2" height="3" fill="#74b9ff"/><rect x="79" y="79" width="2" height="3" fill="#74b9ff"/><rect x="82" y="83" width="24" height="3" fill="#74b9ff"/><rect x="82" y="87" width="10" height="3" fill="#74b9ff"/><rect x="92" y="91" width="14" height="3" fill="#74b9ff"/><rect x="65" y="95" width="41" height="3" fill="#74b9ff"/><rect x="65" y="99" width="16" height="3" fill="#74b9ff"/><rect x="65" y="103" width="10" height="3" fill="#74b9ff"/><rect x="75" y="108" width="6" height="3" fill="#74b9ff"/><rect x="73" y="112" width="8" height="3" fill="#74b9ff"/><rect x="73" y="116" width="4" height="3" fill="#74b9ff"/><rect x="77" y="120" width="2" height="3" fill="#74b9ff"/><rect x="79" y="124" width="2" height="3" fill="#74b9ff"/><rect x="82" y="128" width="24" height="3" fill="#74b9ff"/><rect x="82" y="132" width="10" height="3" fill="#74b9ff"/></svg>
<div style="left:368px;top:104px;width:3px;height:288px;background:#f0f0f0;"></div>
<div style="left:58px;top:400px;width:310px;height:11px;background:#dedede;"></div>
<div style="left:59px;top:415px;width:309px;height:18px;background:#f0f0f0;border:1px solid #b4b4b4;border-top-color:#d8d8d8;box-sizing:border-box;"></div>
<span id="pjtitle" class="t" style="left:62px;top:416px;font-size:12px;line-height:16px;color:#000;transform:scaleX(0.886);">プロジェクト</span>
<svg style="left:334px;top:420px" width="10" height="10" viewBox="0 0 10 10" shape-rendering="crispEdges"><path d="M2.500 1v5M2 1.500h5M6 1v5M7 1v5M1 6.500h8M4.500 7v3" stroke="#000" fill="none"/></svg>
<svg style="left:352px;top:420px" width="10" height="9" viewBox="0 0 10 9"><path d="M1 1l7.500 7M8.500 1L1 8" stroke="#000" stroke-width="1.600" fill="none"/></svg>
<div style="left:59px;top:435px;width:308px;height:262px;background:#fff;border-top:1px solid #a0a0a0;border-left:1px solid #a0a0a0;border-bottom:1px solid #e3e3e3;box-sizing:border-box;"></div>
<div style="left:60px;top:436px;width:307px;height:260px;background:#fff;border-top:1px solid #696969;border-left:1px solid #696969;box-sizing:border-box;"></div>
<div style="left:350px;top:437px;width:17px;height:259px;background:#f0f0f0;"></div>
<div style="left:350px;top:454px;width:15px;height:105px;background:#cdcdcd;"></div>
<svg style="left:353px;top:443px" width="9" height="6" viewBox="0 0 9 6"><path d="M1 5l3.500-3.500L8 5" stroke="#606060" stroke-width="1.900" fill="none"/></svg>
<svg style="left:353px;top:685px" width="9" height="6" viewBox="0 0 9 6"><path d="M1 1l3.500 3.500L8 1" stroke="#606060" stroke-width="1.900" fill="none"/></svg>
<div style="left:61px;top:437px;width:289px;height:259px;overflow:hidden;">
<div style="left:29px;top:18px;width:1px;height:245px;background-image:repeating-linear-gradient(180deg,#808080 0 1px,transparent 1px 2px);"></div>
<div style="left:48px;top:36px;width:1px;height:44px;background-image:repeating-linear-gradient(180deg,#808080 0 1px,transparent 1px 2px);"></div>
<div style="left:48px;top:125px;width:1px;height:140px;background-image:repeating-linear-gradient(180deg,#808080 0 1px,transparent 1px 2px);"></div>
<div style="left:11px;top:10px;width:10px;height:1px;background-image:repeating-linear-gradient(90deg,#808080 0 1px,transparent 1px 2px);"></div>
<svg style="left:6px;top:6px" width="9" height="9" viewBox="0 0 9 9"><rect x=".5" y=".5" width="8" height="8" rx="1.500" fill="#f4f4f4" stroke="#919191"/><g shape-rendering="crispEdges"><path d="M2 4.500h5" stroke="#3a4a9a"/></g></svg>
<span id="tree0" class="t" style="left:42px;top:1px;font-size:12px;line-height:16px;color:#000;transform:scaleX(0.808);">プロジェクト</span>
<svg style="left:21px;top:1px" width="16" height="16" viewBox="0 0 16 16"><path d="M8 .8L15.200 8 8 15.200.8 8z" fill="#fff" stroke="#0000e0" stroke-width="1.300"/></svg>
<div style="left:30px;top:28px;width:10px;height:1px;background-image:repeating-linear-gradient(90deg,#808080 0 1px,transparent 1px 2px);"></div>
<svg style="left:25px;top:24px" width="9" height="9" viewBox="0 0 9 9"><rect x=".5" y=".5" width="8" height="8" rx="1.500" fill="#f4f4f4" stroke="#919191"/><g shape-rendering="crispEdges"><path d="M2 4.500h5" stroke="#3a4a9a"/></g></svg>
<span id="tree1" class="t" style="left:61px;top:19px;font-size:12px;line-height:16px;color:#000;transform:scaleX(0.803);">ウィンドウ</span>
<svg style="left:40px;top:19px" width="16" height="16" viewBox="0 0 16 16"><rect x=".5" y="1.500" width="15" height="13" fill="#fff" stroke="#0000ff" stroke-width="1" shape-rendering="crispEdges"/><rect x="0" y="1" width="16" height="3" fill="#0000ff" shape-rendering="crispEdges"/></svg>
<div style="left:49px;top:46px;width:10px;height:1px;background-image:repeating-linear-gradient(90deg,#808080 0 1px,transparent 1px 2px);"></div>
<svg style="left:44px;top:42px" width="9" height="9" viewBox="0 0 9 9"><rect x=".5" y=".5" width="8" height="8" rx="1.500" fill="#f4f4f4" stroke="#919191"/><g shape-rendering="crispEdges"><path d="M2 4.500h5" stroke="#3a4a9a"/><path d="M4.500 2v5" stroke="#3a4a9a"/></g></svg>
<span id="tree2" class="t" style="left:80px;top:37px;font-size:12px;line-height:16px;color:#000;transform:scaleX(0.879);">新規ウィンドウ</span>
<svg style="left:59px;top:37px" width="16" height="16" viewBox="0 0 16 16"><rect x=".5" y="1.500" width="15" height="13" fill="#fff" stroke="#0000ff" stroke-width="1" shape-rendering="crispEdges"/><rect x="0" y="1" width="16" height="3" fill="#0000ff" shape-rendering="crispEdges"/><path d="M10.500 0v9M6 4.500h9M7 1l7 7M14 1L7 8" stroke="#fff" stroke-width="2.400"/><path d="M10.500 0v9M6 4.500h9M7 1l7 7M14 1L7 8" stroke="#ffee00" stroke-width="1.200"/><circle cx="10.500" cy="4.500" r="1.600" fill="#e8e8e8"/></svg>
<div style="left:49px;top:64px;width:10px;height:1px;background-image:repeating-linear-gradient(90deg,#808080 0 1px,transparent 1px 2px);"></div>
<span id="tree3" class="t" style="left:80px;top:55px;font-size:12px;line-height:16px;color:#000;transform:scaleX(0.879);">登録されたスタイル</span>
<svg style="left:59px;top:55px" width="16" height="16" viewBox="0 0 16 16"><rect x=".5" y="1.500" width="15" height="13" fill="#fff" stroke="#0000ff" stroke-width="1" shape-rendering="crispEdges"/><rect x="0" y="1" width="16" height="3" fill="#0000ff" shape-rendering="crispEdges"/><path d="M10.500 0v9M6 4.500h9M7 1l7 7M14 1L7 8" stroke="#fff" stroke-width="2.400"/><path d="M10.500 0v9M6 4.500h9M7 1l7 7M14 1L7 8" stroke="#ffee00" stroke-width="1.200"/><circle cx="10.500" cy="4.500" r="1.600" fill="#e8e8e8"/></svg>
<div style="left:49px;top:82px;width:10px;height:1px;background-image:repeating-linear-gradient(90deg,#808080 0 1px,transparent 1px 2px);"></div>
<svg style="left:44px;top:78px" width="9" height="9" viewBox="0 0 9 9"><rect x=".5" y=".5" width="8" height="8" rx="1.500" fill="#f4f4f4" stroke="#919191"/><g shape-rendering="crispEdges"><path d="M2 4.500h5" stroke="#3a4a9a"/><path d="M4.500 2v5" stroke="#3a4a9a"/></g></svg>
<span id="tree4" class="t" style="left:80px;top:73px;font-size:12px;line-height:16px;color:#000;transform:scaleX(0.879);">既存ウィンドウ</span>
<svg style="left:59px;top:73px" width="16" height="16" viewBox="0 0 16 16"><rect x=".5" y="1.500" width="15" height="13" fill="#fff" stroke="#0000ff" stroke-width="1" shape-rendering="crispEdges"/><rect x="0" y="1" width="16" height="3" fill="#0000ff" shape-rendering="crispEdges"/></svg>
<div style="left:30px;top:100px;width:10px;height:1px;background-image:repeating-linear-gradient(90deg,#808080 0 1px,transparent 1px 2px);"></div>
<span id="tree5" class="t" style="left:61px;top:91px;font-size:12px;line-height:16px;color:#000;transform:scaleX(0.835);">スナップショット</span>
<svg style="left:40px;top:91px" width="16" height="16" viewBox="0 0 16 16"><path d="M1 4h3l2-3h5l2 3h3v11H1z" fill="#808080"/><path d="M8.500 5.500l3.500 3.500-3.500 3.500L5 9z" fill="#fff"/><circle cx="8.500" cy="9" r="1.600" fill="#808080"/><rect x="2" y="5" width="2" height="1" fill="#fff"/></svg>
<div style="left:30px;top:118px;width:10px;height:1px;background-image:repeating-linear-gradient(90deg,#808080 0 1px,transparent 1px 2px);"></div>
<svg style="left:25px;top:114px" width="9" height="9" viewBox="0 0 9 9"><rect x=".5" y=".5" width="8" height="8" rx="1.500" fill="#f4f4f4" stroke="#919191"/><g shape-rendering="crispEdges"><path d="M2 4.500h5" stroke="#3a4a9a"/></g></svg>
<span id="tree6" class="t" style="left:61px;top:109px;font-size:12px;line-height:16px;color:#000;transform:scaleX(0.745);">データ</span>
<svg style="left:40px;top:109px" width="16" height="16" viewBox="0 0 16 16"><path d="M8 0C8.500 5 11 7.500 16 8 11 8.500 8.500 11 8 16 7.500 11 5 8.500 0 8 5 7.500 7.500 5 8 0z" fill="#ffff00" stroke="#a0a000" stroke-width=".6"/></svg>
<div style="left:49px;top:136px;width:10px;height:1px;background-image:repeating-linear-gradient(90deg,#808080 0 1px,transparent 1px 2px);"></div>
<svg style="left:44px;top:132px" width="9" height="9" viewBox="0 0 9 9"><rect x=".5" y=".5" width="8" height="8" rx="1.500" fill="#f4f4f4" stroke="#919191"/><g shape-rendering="crispEdges"><path d="M2 4.500h5" stroke="#3a4a9a"/><path d="M4.500 2v5" stroke="#3a4a9a"/></g></svg>
<span id="tree7" class="t" style="left:80px;top:127px;font-size:12px;line-height:16px;color:#000;transform:scaleX(0.958);">資源</span>
<svg style="left:59px;top:127px" width="16" height="16" viewBox="0 0 16 16"><rect x="1" y="1" width="14" height="14" fill="#fff" stroke="#00007b" stroke-width="1" shape-rendering="crispEdges"/><rect x=".5" y=".5" width="15" height="2" fill="#00007b"/><g stroke="#777" shape-rendering="crispEdges"><path d="M3 4.500h4M3 6.500h4M3 8.500h4M3 10.500h4M3 12.500h4M9 4.500h4M9 6.500h4M9 8.500h4M9 10.500h4M9 12.500h4"/></g></svg>
<div style="left:49px;top:154px;width:10px;height:1px;background-image:repeating-linear-gradient(90deg,#808080 0 1px,transparent 1px 2px);"></div>
<svg style="left:44px;top:150px" width="9" height="9" viewBox="0 0 9 9"><rect x=".5" y=".5" width="8" height="8" rx="1.500" fill="#f4f4f4" stroke="#919191"/><g shape-rendering="crispEdges"><path d="M2 4.500h5" stroke="#3a4a9a"/><path d="M4.500 2v5" stroke="#3a4a9a"/></g></svg>
<span id="tree8" class="t" style="left:80px;top:145px;font-size:12px;line-height:16px;color:#000;transform:scaleX(0.958);">品目</span>
<svg style="left:59px;top:145px" width="16" height="16" viewBox="0 0 16 16"><rect x="1" y="1" width="14" height="14" fill="#fff" stroke="#00007b" stroke-width="1" shape-rendering="crispEdges"/><rect x=".5" y=".5" width="15" height="2" fill="#00007b"/><g stroke="#777" shape-rendering="crispEdges"><path d="M3 4.500h4M3 6.500h4M3 8.500h4M3 10.500h4M3 12.500h4M9 4.500h4M9 6.500h4M9 8.500h4M9 10.500h4M9 12.500h4"/></g></svg>
<div style="left:49px;top:172px;width:10px;height:1px;background-image:repeating-linear-gradient(90deg,#808080 0 1px,transparent 1px 2px);"></div>
<svg style="left:44px;top:168px" width="9" height="9" viewBox="0 0 9 9"><rect x=".5" y=".5" width="8" height="8" rx="1.500" fill="#f4f4f4" stroke="#919191"/><g shape-rendering="crispEdges"><path d="M2 4.500h5" stroke="#3a4a9a"/><path d="M4.500 2v5" stroke="#3a4a9a"/></g></svg>
<span id="tree9" class="t" style="left:80px;top:163px;font-size:12px;line-height:16px;color:#000;transform:scaleX(0.869);">作業グラフ</span>
<svg style="left:59px;top:163px" width="16" height="16" viewBox="0 0 16 16"><rect x="1" y="1" width="14" height="14" fill="#fff" stroke="#00007b" stroke-width="1" shape-rendering="crispEdges"/><rect x=".5" y=".5" width="15" height="2" fill="#00007b"/><g stroke="#777" shape-rendering="crispEdges"><path d="M3 4.500h4M3 6.500h4M3 8.500h4M3 10.500h4M3 12.500h4M9 4.500h4M9 6.500h4M9 8.500h4M9 10.500h4M9 12.500h4"/></g></svg>
<div style="left:49px;top:190px;width:10px;height:1px;background-image:repeating-linear-gradient(90deg,#808080 0 1px,transparent 1px 2px);"></div>
<svg style="left:44px;top:186px" width="9" height="9" viewBox="0 0 9 9"><rect x=".5" y=".5" width="8" height="8" rx="1.500" fill="#f4f4f4" stroke="#919191"/><g shape-rendering="crispEdges"><path d="M2 4.500h5" stroke="#3a4a9a"/><path d="M4.500 2v5" stroke="#3a4a9a"/></g></svg>
<span id="tree10" class="t" style="left:80px;top:181px;font-size:12px;line-height:16px;color:#000;transform:scaleX(0.958);">作業</span>
<svg style="left:59px;top:181px" width="16" height="16" viewBox="0 0 16 16"><rect x="1" y="1" width="14" height="14" fill="#fff" stroke="#00007b" stroke-width="1" shape-rendering="crispEdges"/><rect x=".5" y=".5" width="15" height="2" fill="#00007b"/><g stroke="#777" shape-rendering="crispEdges"><path d="M3 4.500h4M3 6.500h4M3 8.500h4M3 10.500h4M3 12.500h4M9 4.500h4M9 6.500h4M9 8.500h4M9 10.500h4M9 12.500h4"/></g></svg>
<div style="left:49px;top:208px;width:10px;height:1px;background-image:repeating-linear-gradient(90deg,#808080 0 1px,transparent 1px 2px);"></div>
<svg style="left:44px;top:204px" width="9" height="9" viewBox="0 0 9 9"><rect x=".5" y=".5" width="8" height="8" rx="1.500" fill="#f4f4f4" stroke="#919191"/><g shape-rendering="crispEdges"><path d="M2 4.500h5" stroke="#3a4a9a"/><path d="M4.500 2v5" stroke="#3a4a9a"/></g></svg>
<span id="tree11" class="t" style="left:80px;top:199px;font-size:12px;line-height:16px;color:#000;transform:scaleX(0.780);">カレンダー</span>
<svg style="left:59px;top:199px" width="16" height="16" viewBox="0 0 16 16"><rect x="1" y="1" width="14" height="14" fill="#fff" stroke="#00007b" stroke-width="1" shape-rendering="crispEdges"/><rect x=".5" y=".5" width="15" height="2" fill="#00007b"/><g stroke="#777" shape-rendering="crispEdges"><path d="M3 4.500h4M3 6.500h4M3 8.500h4M3 10.500h4M3 12.500h4M9 4.500h4M9 6.500h4M9 8.500h4M9 10.500h4M9 12.500h4"/></g></svg>
<div style="left:49px;top:226px;width:10px;height:1px;background-image:repeating-linear-gradient(90deg,#808080 0 1px,transparent 1px 2px);"></div>
<svg style="left:44px;top:222px" width="9" height="9" viewBox="0 0 9 9"><rect x=".5" y=".5" width="8" height="8" rx="1.500" fill="#f4f4f4" stroke="#919191"/><g shape-rendering="crispEdges"><path d="M2 4.500h5" stroke="#3a4a9a"/><path d="M4.500 2v5" stroke="#3a4a9a"/></g></svg>
<span id="tree12" class="t" style="left:80px;top:217px;font-size:12px;line-height:16px;color:#000;transform:scaleX(0.869);">工程グラフ</span>
<svg style="left:59px;top:217px" width="16" height="16" viewBox="0 0 16 16"><rect x="1" y="1" width="14" height="14" fill="#fff" stroke="#00007b" stroke-width="1" shape-rendering="crispEdges"/><rect x=".5" y=".5" width="15" height="2" fill="#00007b"/><g stroke="#777" shape-rendering="crispEdges"><path d="M3 4.500h4M3 6.500h4M3 8.500h4M3 10.500h4M3 12.500h4M9 4.500h4M9 6.500h4M9 8.500h4M9 10.500h4M9 12.500h4"/></g></svg>
<div style="left:49px;top:244px;width:10px;height:1px;background-image:repeating-linear-gradient(90deg,#808080 0 1px,transparent 1px 2px);"></div>
<svg style="left:44px;top:240px" width="9" height="9" viewBox="0 0 9 9"><rect x=".5" y=".5" width="8" height="8" rx="1.500" fill="#f4f4f4" stroke="#919191"/><g shape-rendering="crispEdges"><path d="M2 4.500h5" stroke="#3a4a9a"/><path d="M4.500 2v5" stroke="#3a4a9a"/></g></svg>
<span id="tree13" class="t" style="left:80px;top:235px;font-size:12px;line-height:16px;color:#000;transform:scaleX(0.972);">工程表</span>
<svg style="left:59px;top:235px" width="16" height="16" viewBox="0 0 16 16"><rect x="1" y="1" width="14" height="14" fill="#fff" stroke="#00007b" stroke-width="1" shape-rendering="crispEdges"/><rect x=".5" y=".5" width="15" height="2" fill="#00007b"/><g stroke="#777" shape-rendering="crispEdges"><path d="M3 4.500h4M3 6.500h4M3 8.500h4M3 10.500h4M3 12.500h4M9 4.500h4M9 6.500h4M9 8.500h4M9 10.500h4M9 12.500h4"/></g></svg>
<div style="left:49px;top:262px;width:10px;height:1px;background-image:repeating-linear-gradient(90deg,#808080 0 1px,transparent 1px 2px);"></div>
<svg style="left:44px;top:258px" width="9" height="9" viewBox="0 0 9 9"><rect x=".5" y=".5" width="8" height="8" rx="1.500" fill="#f4f4f4" stroke="#919191"/><g shape-rendering="crispEdges"><path d="M2 4.500h5" stroke="#3a4a9a"/><path d="M4.500 2v5" stroke="#3a4a9a"/></g></svg>
<span id="tree14" class="t" style="left:80px;top:253px;font-size:12px;line-height:16px;color:#000;transform:scaleX(0.958);">工程階層</span>
<svg style="left:59px;top:253px" width="16" height="16" viewBox="0 0 16 16"><rect x="1" y="1" width="14" height="14" fill="#fff" stroke="#00007b" stroke-width="1" shape-rendering="crispEdges"/><rect x=".5" y=".5" width="15" height="2" fill="#00007b"/><g stroke="#777" shape-rendering="crispEdges"><path d="M3 4.500h4M3 6.500h4M3 8.500h4M3 10.500h4M3 12.500h4M9 4.500h4M9 6.500h4M9 8.500h4M9 10.500h4M9 12.500h4"/></g></svg>
</div>
<div style="left:62px;top:700px;width:104px;height:19px;background:#f0f0f0;border:1px solid #a0a0a0;border-bottom:none;box-sizing:border-box;"></div>
<span id="btab" class="t" style="left:67px;top:702px;font-size:12px;line-height:16px;color:#6d6d6d;transform:scaleX(0.957);">作業ビューワー</span>
<span id="status" class="t" style="left:6px;top:722px;font-size:11px;line-height:15px;color:#000;transform:scaleX(0.999);line-height:16px;">For Help, press F1</span>
<svg style="left:1189px;top:728px" width="8" height="8" shape-rendering="crispEdges"><rect x="6" y="0" width="2" height="2" fill="#b8b8b8"/><rect x="3" y="3" width="2" height="2" fill="#b8b8b8"/><rect x="6" y="3" width="2" height="2" fill="#b8b8b8"/><rect x="0" y="6" width="2" height="2" fill="#b8b8b8"/><rect x="3" y="6" width="2" height="2" fill="#b8b8b8"/><rect x="6" y="6" width="2" height="2" fill="#b8b8b8"/></svg>
<div style="left:372px;top:86px;width:792px;height:612px;background:#f1f1f1;border:1px solid #a0a0a0;box-sizing:border-box;"></div>
<div style="left:373px;top:108px;width:790px;height:589px;background:#e0e0ff;"></div>
<div style="left:375px;top:109px;width:785px;height:585px;background:#fff;border:1px solid #a0a0a0;box-sizing:border-box;"></div>
<div style="left:376px;top:110px;width:783px;height:583px;background:#f0f0f0;"></div>
<div style="left:426px;top:88px;width:117px;height:19px;background:#e0e0ff;"></div>
<div style="left:545px;top:88px;width:121px;height:19px;background:#e0e0ff;"></div>
<div style="left:667px;top:88px;width:71px;height:19px;background:#e0ffe0;"></div>
<div style="left:739px;top:88px;width:93px;height:19px;background:#e0ffe0;"></div>
<div style="left:833px;top:88px;width:67px;height:19px;background:#e0ffe0;"></div>
<div style="left:901px;top:88px;width:84px;height:19px;background:#e0ffe0;"></div>
<div style="left:986px;top:88px;width:94px;height:19px;background:#e0ffe0;"></div>
<div style="left:425px;top:90px;width:1px;height:17px;background:#666;"></div>
<div style="left:544px;top:90px;width:1px;height:17px;background:#666;"></div>
<div style="left:666px;top:90px;width:1px;height:17px;background:#666;"></div>
<div style="left:738px;top:90px;width:1px;height:17px;background:#666;"></div>
<div style="left:832px;top:90px;width:1px;height:17px;background:#666;"></div>
<div style="left:900px;top:90px;width:1px;height:17px;background:#666;"></div>
<div style="left:985px;top:90px;width:1px;height:17px;background:#666;"></div>
<div style="left:1080px;top:90px;width:1px;height:17px;background:#666;"></div>
<span id="tab0" class="t" style="left:381px;top:89px;font-size:12px;line-height:16px;color:#222;transform:scaleX(0.871);letter-spacing:.3px;">readme</span>
<span id="tab1" class="t" style="left:432px;top:86px;font-size:15px;line-height:19px;color:#000;font-weight:bold;transform:scaleX(0.786);">ジョブガントチャート</span>
<div style="left:432px;top:103px;width:107px;height:2px;background:#000;"></div>
<span id="tab2" class="t" style="left:550px;top:89px;font-size:13px;line-height:17px;color:#333;transform:scaleX(0.855);">オーダーガントチャート</span>
<span id="tab3" class="t" style="left:673px;top:89px;font-size:13px;line-height:17px;color:#333;transform:scaleX(0.847);">マイルストン</span>
<span id="tab4" class="t" style="left:745px;top:89px;font-size:13px;line-height:17px;color:#333;transform:scaleX(0.934);">工程階層マスタ</span>
<span id="tab5" class="t" style="left:839px;top:89px;font-size:13px;line-height:17px;color:#333;transform:scaleX(0.906);">工程マスタ</span>
<span id="tab6" class="t" style="left:907px;top:89px;font-size:13px;line-height:17px;color:#333;transform:scaleX(0.839);">オーダーデータ</span>
<span id="tab7" class="t" style="left:992px;top:89px;font-size:13px;line-height:17px;color:#333;transform:scaleX(0.867);">工程グラフマスタ</span>
<svg style="left:1110px;top:91px" width="46" height="10" viewBox="0 0 46 10"><path d="M5.500 1v8L1.500 5z" fill="none" stroke="#444" stroke-width="1"/><path d="M21.500 1v8l4-4z" fill="none" stroke="#444" stroke-width="1"/><path d="M37 1.500l7 7M44 1.500l-7 7" stroke="#222" stroke-width="1.500" fill="none"/></svg>
<div style="left:377px;top:110px;width:765px;height:1px;background:#000;"></div>
<div style="left:377px;top:111px;width:154px;height:58px;background:#bfffdc;"></div>
<div style="left:531px;top:111px;width:1px;height:59px;background:#000;"></div>
<div style="left:532px;top:111px;width:11px;height:58px;background:#a0e0ff;"></div>
<div style="left:543px;top:111px;width:1px;height:59px;background:#000;"></div>
<div style="left:544px;top:111px;width:216px;height:58px;background:#a0e0ff;"></div>
<div style="left:760px;top:111px;width:1px;height:59px;background:#000;"></div>
<div style="left:761px;top:111px;width:216px;height:58px;background:#c090ff;"></div>
<div style="left:977px;top:111px;width:1px;height:59px;background:#000;"></div>
<div style="left:978px;top:111px;width:164px;height:58px;background:#c090ff;"></div>
<div style="left:531px;top:168px;width:611px;height:1px;background-image:repeating-linear-gradient(90deg,#000 0 1px,transparent 1px 7px);background-position:5px 0;"></div>
<div style="left:377px;top:169px;width:765px;height:1px;background:#000;"></div>
<div style="left:377px;top:170px;width:154px;height:507px;background:#fff;"></div>
<div style="left:532px;top:170px;width:610px;height:507px;background:#c8ffc6;background-image:repeating-linear-gradient(90deg,#e0dce0 0 1px,transparent 1px 7px);background-position:4px 0;"></div>
<div style="left:531px;top:170px;width:1px;height:507px;background:#000;"></div>
<div style="left:543px;top:170px;width:1px;height:507px;background:#808080;"></div>
<div style="left:760px;top:170px;width:1px;height:507px;background:#808080;"></div>
<div style="left:977px;top:170px;width:1px;height:507px;background:#808080;"></div>
<div style="left:377px;top:170px;width:765px;height:507px;overflow:hidden;">
<div style="left:38px;top:-24px;width:116px;height:34px;background:#74b9ff;border:1px solid #000;border-right:none;box-sizing:border-box;"></div>
<div style="left:155px;top:9px;width:610px;height:1px;background:#808080;"></div>
<div style="left:38px;top:9px;width:116px;height:34px;background:#74b9ff;border:1px solid #000;border-right:none;box-sizing:border-box;"></div>
<div style="left:155px;top:42px;width:610px;height:1px;background:#808080;"></div>
<div style="left:393px;top:13px;width:15px;height:25px;background:#74b9ff;border:1px solid #808080;box-sizing:border-box;"></div>
<div style="left:38px;top:42px;width:116px;height:34px;background:#74b9ff;border:1px solid #000;border-right:none;box-sizing:border-box;"></div>
<div style="left:155px;top:75px;width:610px;height:1px;background:#808080;"></div>
<div style="left:408px;top:46px;width:15px;height:25px;background:#74b9ff;border:1px solid #808080;box-sizing:border-box;"></div>
<div style="left:31px;top:75px;width:123px;height:34px;background:#74b9ff;border:1px solid #000;border-right:none;box-sizing:border-box;"></div>
<div style="left:155px;top:108px;width:610px;height:1px;background:#808080;"></div>
<div style="left:427px;top:79px;width:199px;height:25px;background:#74b9ff;border:1px solid #808080;box-sizing:border-box;"></div>
<div style="left:38px;top:108px;width:116px;height:34px;background:#74b9ff;border:1px solid #000;border-right:none;box-sizing:border-box;"></div>
<div style="left:155px;top:141px;width:610px;height:1px;background:#808080;"></div>
<div style="left:427px;top:112px;width:80px;height:25px;background:#74b9ff;border:1px solid #808080;box-sizing:border-box;"></div>
<div style="left:38px;top:141px;width:116px;height:34px;background:#74b9ff;border:1px solid #000;border-right:none;box-sizing:border-box;"></div>
<div style="left:155px;top:174px;width:610px;height:1px;background:#808080;"></div>
<div style="left:511px;top:145px;width:115px;height:25px;background:#74b9ff;border:1px solid #808080;box-sizing:border-box;"></div>
<div style="left:24px;top:174px;width:130px;height:34px;background:#74b9ff;border:1px solid #000;border-right:none;box-sizing:border-box;"></div>
<div style="left:155px;top:207px;width:610px;height:1px;background:#808080;"></div>
<div style="left:290px;top:178px;width:336px;height:25px;background:#74b9ff;border:1px solid #808080;box-sizing:border-box;"></div>
<div style="left:31px;top:207px;width:123px;height:34px;background:#74b9ff;border:1px solid #000;border-right:none;box-sizing:border-box;"></div>
<div style="left:155px;top:240px;width:610px;height:1px;background:#808080;"></div>
<div style="left:290px;top:211px;width:133px;height:25px;background:#74b9ff;border:1px solid #808080;box-sizing:border-box;"></div>
<div style="left:38px;top:240px;width:116px;height:34px;background:#74b9ff;border:1px solid #000;border-right:none;box-sizing:border-box;"></div>
<div style="left:155px;top:273px;width:610px;height:1px;background:#808080;"></div>
<div style="left:290px;top:244px;width:84px;height:25px;background:#74b9ff;border:1px solid #808080;box-sizing:border-box;"></div>
<div style="left:38px;top:273px;width:116px;height:34px;background:#74b9ff;border:1px solid #000;border-right:none;box-sizing:border-box;"></div>
<div style="left:155px;top:306px;width:610px;height:1px;background:#808080;"></div>
<div style="left:374px;top:277px;width:49px;height:25px;background:#74b9ff;border:1px solid #808080;box-sizing:border-box;"></div>
<div style="left:31px;top:306px;width:123px;height:34px;background:#74b9ff;border:1px solid #000;border-right:none;box-sizing:border-box;"></div>
<div style="left:155px;top:339px;width:610px;height:1px;background:#808080;"></div>
<div style="left:359px;top:310px;width:64px;height:25px;background:#74b9ff;border:1px solid #808080;box-sizing:border-box;"></div>
<div style="left:38px;top:339px;width:116px;height:34px;background:#74b9ff;border:1px solid #000;border-right:none;box-sizing:border-box;"></div>
<div style="left:155px;top:372px;width:610px;height:1px;background:#808080;"></div>
<div style="left:359px;top:343px;width:34px;height:25px;background:#74b9ff;border:1px solid #808080;box-sizing:border-box;"></div>
<div style="left:38px;top:372px;width:116px;height:34px;background:#74b9ff;border:1px solid #000;border-right:none;box-sizing:border-box;"></div>
<div style="left:155px;top:405px;width:610px;height:1px;background:#808080;"></div>
<div style="left:393px;top:376px;width:15px;height:25px;background:#74b9ff;border:1px solid #808080;box-sizing:border-box;"></div>
<div style="left:38px;top:405px;width:116px;height:34px;background:#74b9ff;border:1px solid #000;border-right:none;box-sizing:border-box;"></div>
<div style="left:155px;top:438px;width:610px;height:1px;background:#808080;"></div>
<div style="left:408px;top:409px;width:15px;height:25px;background:#74b9ff;border:1px solid #808080;box-sizing:border-box;"></div>
<div style="left:31px;top:438px;width:123px;height:34px;background:#74b9ff;border:1px solid #000;border-right:none;box-sizing:border-box;"></div>
<div style="left:155px;top:471px;width:610px;height:1px;background:#808080;"></div>
<div style="left:427px;top:442px;width:199px;height:25px;background:#74b9ff;border:1px solid #808080;box-sizing:border-box;"></div>
<div style="left:38px;top:471px;width:116px;height:34px;background:#74b9ff;border:1px solid #000;border-right:none;box-sizing:border-box;"></div>
<div style="left:155px;top:504px;width:610px;height:1px;background:#808080;"></div>
<div style="left:427px;top:475px;width:80px;height:25px;background:#74b9ff;border:1px solid #808080;box-sizing:border-box;"></div>
<div style="left:0px;top:0px;width:1px;height:507px;background:#000;"></div>
<div style="left:5px;top:0px;width:1px;height:507px;background:#000;"></div>
<div style="left:12px;top:0px;width:1px;height:181px;background:#000;"></div>
<div style="left:12px;top:181px;width:3px;height:1px;background:#000;"></div>
<div style="left:19px;top:0px;width:1px;height:82px;background:#000;"></div>
<div style="left:19px;top:81px;width:3px;height:1px;background:#000;"></div>
<div style="left:26px;top:0px;width:1px;height:49px;background:#000;"></div>
<div style="left:26px;top:15px;width:8px;height:1px;background:#000;"></div>
<div style="left:26px;top:48px;width:8px;height:1px;background:#000;"></div>
<svg style="left:22px;top:77px" width="9" height="9" viewBox="0 0 9 9" shape-rendering="crispEdges"><rect x=".5" y=".5" width="8" height="8" fill="#fff" stroke="#000"/><path d="M2 4.500h5" stroke="#000"/></svg>
<div style="left:26px;top:86px;width:1px;height:62px;background:#000;"></div>
<div style="left:26px;top:114px;width:8px;height:1px;background:#000;"></div>
<div style="left:26px;top:147px;width:8px;height:1px;background:#000;"></div>
<svg style="left:15px;top:176px" width="9" height="9" viewBox="0 0 9 9" shape-rendering="crispEdges"><rect x=".5" y=".5" width="8" height="8" fill="#fff" stroke="#000"/><path d="M2 4.500h5" stroke="#000"/></svg>
<div style="left:19px;top:185px;width:1px;height:260px;background:#000;"></div>
<div style="left:19px;top:213px;width:3px;height:1px;background:#000;"></div>
<svg style="left:22px;top:209px" width="9" height="9" viewBox="0 0 9 9" shape-rendering="crispEdges"><rect x=".5" y=".5" width="8" height="8" fill="#fff" stroke="#000"/><path d="M2 4.500h5" stroke="#000"/></svg>
<div style="left:26px;top:218px;width:1px;height:62px;background:#000;"></div>
<div style="left:26px;top:246px;width:8px;height:1px;background:#000;"></div>
<div style="left:26px;top:279px;width:8px;height:1px;background:#000;"></div>
<div style="left:19px;top:312px;width:3px;height:1px;background:#000;"></div>
<svg style="left:22px;top:308px" width="9" height="9" viewBox="0 0 9 9" shape-rendering="crispEdges"><rect x=".5" y=".5" width="8" height="8" fill="#fff" stroke="#000"/><path d="M2 4.500h5" stroke="#000"/></svg>
<div style="left:26px;top:317px;width:1px;height:95px;background:#000;"></div>
<div style="left:26px;top:345px;width:8px;height:1px;background:#000;"></div>
<div style="left:26px;top:378px;width:8px;height:1px;background:#000;"></div>
<div style="left:26px;top:411px;width:8px;height:1px;background:#000;"></div>
<div style="left:19px;top:444px;width:3px;height:1px;background:#000;"></div>
<svg style="left:22px;top:440px" width="9" height="9" viewBox="0 0 9 9" shape-rendering="crispEdges"><rect x=".5" y=".5" width="8" height="8" fill="#fff" stroke="#000"/><path d="M2 4.500h5" stroke="#000"/></svg>
<div style="left:26px;top:449px;width:1px;height:58px;background:#000;"></div>
<div style="left:26px;top:477px;width:8px;height:1px;background:#000;"></div>
</div>
<div style="left:1142px;top:110px;width:17px;height:567px;background:#f0f0f0;"></div>
<div style="left:1142px;top:110px;width:17px;height:7px;background:#f0f0f0;border:1px solid #fff;border-right:1px solid #696969;border-bottom:2px solid #8a8a8a;box-sizing:border-box;"></div>
<svg style="left:1146px;top:123px" width="9" height="6" viewBox="0 0 9 6"><path d="M1 5l3.500-3.500L8 5" stroke="#606060" stroke-width="1.900" fill="none"/></svg>
<svg style="left:1146px;top:663px" width="9" height="6" viewBox="0 0 9 6"><path d="M1 1l3.500 3.500L8 1" stroke="#606060" stroke-width="1.900" fill="none"/></svg>
<div style="left:1144px;top:281px;width:14px;height:128px;background:#cdcdcd;"></div>
<div style="left:377px;top:677px;width:782px;height:16px;background:#f0f0f0;"></div>
<div style="left:377px;top:677px;width:7px;height:16px;background:#f0f0f0;border:1px solid #fff;border-right-color:#696969;border-bottom-color:#696969;box-sizing:border-box;"></div>
<svg style="left:389px;top:681px" width="6" height="9" viewBox="0 0 6 9"><path d="M5 1L1.500 4.500 5 8" stroke="#606060" stroke-width="1.600" fill="none"/></svg>
<svg style="left:1131px;top:681px" width="6" height="9" viewBox="0 0 6 9"><path d="M1 1l3.500 3.500L1 8" stroke="#606060" stroke-width="1.600" fill="none"/></svg>
<div style="left:590px;top:679px;width:191px;height:13px;background:#cdcdcd;"></div>
<svg style="left:1148px;top:683px" width="8" height="8" shape-rendering="crispEdges"><rect x="6" y="0" width="2" height="2" fill="#b8b8b8"/><rect x="3" y="3" width="2" height="2" fill="#b8b8b8"/><rect x="6" y="3" width="2" height="2" fill="#b8b8b8"/><rect x="0" y="6" width="2" height="2" fill="#b8b8b8"/><rect x="3" y="6" width="2" height="2" fill="#b8b8b8"/><rect x="6" y="6" width="2" height="2" fill="#b8b8b8"/></svg>
<div id="mono" style="left:0;top:0;width:1201px;height:739px;filter:url(#c1)"><span class="m" style="left:418px;top:181px;color:#000">船<span class="hw">A:S3-L2-</span>船殻溶接</span><span class="m" style="left:418px;top:214px;color:#000">船<span class="hw">A:S3-L2-</span>塗装</span><span class="m" style="left:411px;top:247px;color:#000">船<span class="hw">A:L2-</span>大組立</span><span class="m" style="left:418px;top:280px;color:#000">船<span class="hw">A:L2-</span>船殻取付</span><span class="m" style="left:418px;top:313px;color:#000">船<span class="hw">A:L2-</span>船殻溶接</span><span class="m" style="left:404px;top:346px;color:#000">船<span class="hw">A:</span>ブロック<span class="hw">L3</span></span><span class="m" style="left:411px;top:379px;color:#000">船<span class="hw">A:S2-L3-</span>小組立</span><span class="m" style="left:418px;top:412px;color:#000">船<span class="hw">A:S2-L3-</span>船殻取付</span><span class="m" style="left:418px;top:445px;color:#000">船<span class="hw">A:S2-L3-</span>船殻溶接</span><span class="m" style="left:411px;top:478px;color:#000">船<span class="hw">A:S3-L3-</span>小組立</span><span class="m" style="left:418px;top:511px;color:#000">船<span class="hw">A:S3-L3-</span>船殻取付</span><span class="m" style="left:418px;top:544px;color:#000">船<span class="hw">A:S3-L3-</span>船殻溶接</span><span class="m" style="left:418px;top:577px;color:#000">船<span class="hw">A:S3-L3-</span>塗装</span><span class="m" style="left:411px;top:610px;color:#000">船<span class="hw">A:L3-</span>大組立</span><span class="m" style="left:418px;top:643px;color:#000">船<span class="hw">A:L3-</span>船殻取付</span></div>
<div id="dig" style="left:0;top:0;width:1201px;height:739px;filter:url(#c2)"><span class="d" style="left:380px;top:112px;">2010</span><span class="d" style="left:630px;top:112px;">2010<span class="sl">/</span>12</span><span class="d" style="left:847px;top:112px;">2011<span class="sl">/</span>01</span><span class="d" style="left:1054px;top:112px;">2011<span class="sl">/</span>02</span><span class="d" style="left:532px;top:151px;">30</span><span class="d" style="left:571px;top:151px;">5</span><span class="d" style="left:788px;top:151px;">5</span><span class="d" style="left:603px;top:151px;">10</span><span class="d" style="left:820px;top:151px;">10</span><span class="d" style="left:638px;top:151px;">15</span><span class="d" style="left:855px;top:151px;">15</span><span class="d" style="left:673px;top:151px;">20</span><span class="d" style="left:890px;top:151px;">20</span><span class="d" style="left:708px;top:151px;">25</span><span class="d" style="left:925px;top:151px;">25</span><span class="d" style="left:743px;top:151px;">30</span><span class="d" style="left:960px;top:151px;">30</span><span class="d" style="left:1005px;top:151px;">5</span><span class="d" style="left:1037px;top:151px;">10</span><span class="d" style="left:1072px;top:151px;">15</span><span class="d" style="left:1107px;top:151px;">20</span></div>
<div style="left:1164px;top:87px;width:37px;height:614px;background:#f0f0f0;border-left:1px solid #fafafa;border-bottom:1px solid #a0a0a0;box-sizing:border-box;"></div>
<svg style="left:1164px;top:87px" width="37" height="614" viewBox="0 0 37 614" shape-rendering="crispEdges"><rect x="3" y="3" width="2" height="2" fill="#b0b0b0"/><rect x="7" y="3" width="2" height="2" fill="#b0b0b0"/><rect x="11" y="3" width="2" height="2" fill="#b0b0b0"/><rect x="15" y="3" width="2" height="2" fill="#b0b0b0"/><rect x="19" y="3" width="2" height="2" fill="#b0b0b0"/><rect x="23" y="3" width="2" height="2" fill="#b0b0b0"/><rect x="27" y="3" width="2" height="2" fill="#b0b0b0"/><rect x="31" y="3" width="2" height="2" fill="#b0b0b0"/><rect x="9.75" y="17.75" width="16.5" height="13.5" fill="#f0f0f0" stroke="#0000ff" stroke-width="1.5"/><rect x="9" y="17" width="18" height="3" fill="#0000ff"/><rect x="9" y="30" width="18" height="2" fill="#0000ff"/><path d="M8.5 15.5L27.5 34.5" fill="none" stroke="#444" stroke-width="1.9" shape-rendering="geometricPrecision"/><path d="M27.5 15.5L8.5 34.5" fill="none" stroke="#444" stroke-width="1.9" shape-rendering="geometricPrecision"/><rect x="7.5" y="45.5" width="21" height="20" fill="#f0f0f0" stroke="#505050" stroke-width="1"/><rect x="10.5" y="50.5" width="7" height="8" fill="#f0f0f0" stroke="#8c8cff" stroke-width="1"/><rect x="10" y="50" width="8" height="2" fill="#8c8cff"/><rect x="19.5" y="50.5" width="7" height="8" fill="#f0f0f0" stroke="#8c8cff" stroke-width="1"/><rect x="19" y="50" width="8" height="2" fill="#8c8cff"/><rect x="14.5" y="54.5" width="8" height="8" fill="#f0f0f0" stroke="#0000ff" stroke-width="1"/><rect x="14" y="54" width="9" height="3" fill="#0000ff"/><rect x="7.5" y="78.5" width="14" height="13" fill="#f0f0f0" stroke="#8c8cff" stroke-width="1"/><rect x="7" y="78" width="15" height="2" fill="#8c8cff"/><rect x="14.5" y="83.5" width="14" height="13" fill="#f0f0f0" stroke="#0000ff" stroke-width="1"/><rect x="14" y="83" width="15" height="3" fill="#0000ff"/><path d="M13.0 107.5L7.5 107.5L7.5 113.0" fill="none" stroke="#505050" stroke-width="1.3"/><path d="M23.0 107.5L28.5 107.5L28.5 113.0" fill="none" stroke="#505050" stroke-width="1.3"/><path d="M13.0 127.5L7.5 127.5L7.5 122.0" fill="none" stroke="#505050" stroke-width="1.3"/><path d="M23.0 127.5L28.5 127.5L28.5 122.0" fill="none" stroke="#505050" stroke-width="1.3"/><rect x="4" y="135" width="28" height="1" fill="#8a8a8a"/><rect x="7.5" y="146.5" width="21" height="20" fill="#f0f0f0" stroke="#505050" stroke-width="1"/><rect x="9.5" y="148.5" width="8" height="7" fill="#f0f0f0" stroke="#0000ff" stroke-width="1"/><rect x="9" y="148" width="9" height="3" fill="#0000ff"/><rect x="9.5" y="157.5" width="8" height="7" fill="#f0f0f0" stroke="#0000ff" stroke-width="1"/><rect x="9" y="157" width="9" height="3" fill="#0000ff"/><rect x="19.5" y="148.5" width="8" height="7" fill="#f0f0f0" stroke="#0000ff" stroke-width="1"/><rect x="19" y="148" width="9" height="3" fill="#0000ff"/><rect x="19.5" y="157.5" width="8" height="7" fill="#f0f0f0" stroke="#0000ff" stroke-width="1"/><rect x="19" y="157" width="9" height="3" fill="#0000ff"/><rect x="2.5" y="172.5" width="31" height="29" fill="#cce4f7" stroke="#99d1ff" stroke-width="1"/><rect x="8.5" y="180.5" width="21" height="16" fill="#cce4f7" stroke="#0000ff" stroke-width="1"/><rect x="8" y="180" width="22" height="4" fill="#0000ff"/><rect x="15" y="181" width="4" height="2" fill="#cce4f7"/><rect x="21" y="181" width="4" height="2" fill="#cce4f7"/><rect x="4" y="205" width="28" height="1" fill="#8a8a8a"/><rect x="7.5" y="216.5" width="14" height="14" fill="#f0f0f0" stroke="#0000ff" stroke-width="1"/><rect x="7" y="216" width="15" height="3" fill="#0000ff"/><rect x="11.5" y="220.5" width="14" height="14" fill="#f0f0f0" stroke="#0000ff" stroke-width="1"/><rect x="11" y="220" width="15" height="3" fill="#0000ff"/><rect x="15.5" y="224.5" width="14" height="12" fill="#f0f0f0" stroke="#0000ff" stroke-width="1"/><rect x="15" y="224" width="15" height="3" fill="#0000ff"/><rect x="7.5" y="247.5" width="9" height="20" fill="#f0f0f0" stroke="#0000ff" stroke-width="1"/><rect x="7" y="247" width="10" height="3" fill="#0000ff"/><rect x="19.5" y="247.5" width="9" height="20" fill="#f0f0f0" stroke="#0000ff" stroke-width="1"/><rect x="19" y="247" width="10" height="3" fill="#0000ff"/><rect x="7.5" y="278.5" width="21" height="9" fill="#f0f0f0" stroke="#0000ff" stroke-width="1"/><rect x="7" y="278" width="22" height="3" fill="#0000ff"/><rect x="7.5" y="289.5" width="21" height="9" fill="#f0f0f0" stroke="#0000ff" stroke-width="1"/><rect x="7" y="289" width="22" height="3" fill="#0000ff"/><rect x="4" y="306" width="28" height="1" fill="#8a8a8a"/><path d="M12 322L16 326" fill="none" stroke="#000" stroke-width="1" shape-rendering="geometricPrecision"/><path d="M21 322L25 326" fill="none" stroke="#000" stroke-width="1" shape-rendering="geometricPrecision"/><path d="M10 329L14 333" fill="none" stroke="#000" stroke-width="1" shape-rendering="geometricPrecision"/><path d="M20 329L24 333" fill="none" stroke="#000" stroke-width="1" shape-rendering="geometricPrecision"/><rect x="7" y="318" width="6" height="5" fill="#0064ff"/><rect x="18" y="318" width="4" height="5" fill="#ffff00"/><rect x="7" y="325" width="4" height="5" fill="#ff0000"/><rect x="15" y="325" width="6" height="5" fill="#0064ff"/><rect x="24" y="325" width="5" height="5" fill="#ffff00"/><rect x="13" y="332" width="7" height="5" fill="#ff0000"/><rect x="23" y="332" width="6" height="5" fill="#0064ff"/><rect x="10" y="349" width="5" height="5" fill="#ffff00"/><rect x="19" y="349" width="7" height="5" fill="#ffff00"/><rect x="7" y="356" width="6" height="5" fill="#0064ff"/><rect x="15" y="356" width="7" height="5" fill="#0064ff"/><rect x="24" y="356" width="6" height="5" fill="#0064ff"/><rect x="8" y="363" width="6" height="5" fill="#ff0000"/><rect x="15" y="363" width="5" height="5" fill="#ff0000"/><rect x="23" y="363" width="7" height="5" fill="#ff0000"/><path d="M7 395L17.5 384L22 389L29 383L29 395z" fill="#0064ff" shape-rendering="geometricPrecision"/><rect x="8" y="413" width="9" height="12" fill="#c8c46a"/><rect x="8" y="413" width="9" height="1" fill="#0064ff"/><rect x="19" y="417" width="9" height="8" fill="#c8c46a"/><rect x="19" y="417" width="9" height="1" fill="#0064ff"/><rect x="7" y="425" width="22" height="1" fill="#555"/><rect x="7" y="441" width="22" height="4" fill="#0064ff"/><rect x="23" y="446" width="6" height="4" fill="#0064ff"/><rect x="15" y="451" width="6" height="4" fill="#0064ff"/><rect x="7" y="456" width="6" height="4" fill="#0064ff"/><rect x="4" y="469" width="28" height="1" fill="#8a8a8a"/><path d="M13.5 489.5L27.5 480.5L27.5 489.5z" fill="#33cc33" stroke="#555" stroke-width="1" shape-rendering="geometricPrecision"/><rect x="7" y="489" width="22" height="1" fill="#444"/><rect x="18.5" y="492.5" width="9" height="8" fill="#33cc33" stroke="#444" stroke-width="1"/><rect x="7" y="500" width="22" height="1" fill="#444"/><path d="M13.5 520.5L27.5 511.5L27.5 520.5z" fill="#4a96c8" stroke="#555" stroke-width="1" shape-rendering="geometricPrecision"/><rect x="7" y="520" width="22" height="1" fill="#444"/><rect x="18.5" y="523.5" width="9" height="8" fill="#4a96c8" stroke="#444" stroke-width="1"/><rect x="7" y="531" width="22" height="1" fill="#444"/><rect x="7" y="542" width="8" height="5" fill="#ff0000"/><rect x="17" y="542" width="8" height="5" fill="#ffff00"/><path d="M7 554.5L17 549.5L22 552L29 546L29 554.5z" fill="#0064ff" shape-rendering="geometricPrecision"/><rect x="9" y="556" width="8" height="6" fill="#c8c46a"/><rect x="9" y="556" width="8" height="1" fill="#0064ff"/><rect x="19" y="558" width="8" height="4" fill="#c8c46a"/><rect x="19" y="558" width="8" height="1" fill="#0064ff"/><rect x="7" y="562" width="22" height="1" fill="#555"/><rect x="7" y="573" width="10" height="1" fill="#0064ff"/><rect x="7" y="575" width="10" height="1" fill="#0064ff"/><rect x="7" y="577" width="10" height="1" fill="#0064ff"/><rect x="7" y="579" width="10" height="1" fill="#0064ff"/><rect x="7" y="581" width="10" height="1" fill="#0064ff"/><rect x="7" y="583" width="10" height="1" fill="#0064ff"/><rect x="7" y="585" width="10" height="1" fill="#0064ff"/><rect x="7" y="587" width="10" height="1" fill="#0064ff"/><rect x="7" y="591" width="10" height="1" fill="#0064ff"/><rect x="7" y="593" width="10" height="1" fill="#0064ff"/><rect x="19" y="573" width="10" height="1" fill="#ff0000"/><rect x="19" y="575" width="10" height="1" fill="#ff0000"/><rect x="19" y="581" width="10" height="1" fill="#ff0000"/><rect x="19" y="583" width="10" height="1" fill="#ff0000"/><rect x="19" y="585" width="10" height="1" fill="#ff0000"/><rect x="19" y="587" width="10" height="1" fill="#ff0000"/><rect x="19" y="589" width="10" height="1" fill="#ff0000"/><rect x="19" y="591" width="10" height="1" fill="#ff0000"/><path d="M12 601L12 608L8 604.5z" fill="#000" shape-rendering="geometricPrecision"/></svg>
<div style="left:30px;top:30px;width:227px;height:38px;background:#fff;"></div>
<span id="lab1" class="t" style="left:30px;top:30px;font-size:28px;line-height:32px;color:#fff100;font-weight:bold;transform:scaleX(1.025);line-height:40px;">ミニマップパネル</span>
<div style="left:51px;top:77px;width:328px;height:323px;border:8px solid #fff100;box-sizing:border-box;"></div>
<div style="left:521px;top:160px;width:631px;height:521px;border:8px solid #ff7f27;box-sizing:border-box;"></div>
<span id="lab2" class="t" style="left:501px;top:122px;font-size:19.5px;line-height:23.5px;color:#ff7f27;font-weight:bold;transform:scaleX(1.075);line-height:30px;font-feature-settings:normal;">チャート表示範囲</span>
<div style="left:145px;top:196px;width:93px;height:83px;border:3px solid #ff7f27;box-sizing:border-box;"></div>
<span id="lab3" class="t" style="left:138px;top:160px;font-size:21px;line-height:25px;color:#ff7f27;font-weight:bold;transform:scaleX(1.000);line-height:30px;">表示枠</span>
<div style="left:0;top:0;width:1201px;height:1px;background:linear-gradient(90deg,#a0a0a0 0,#a0a0a0 1024px,#3a3a34 1025px)"></div>
<div style="left:0;top:0;width:1px;height:739px;background:#aaa"></div>
<div style="left:1200px;top:0;width:1px;height:739px;background:#3a3a34"></div>
<div style="left:0;top:738px;width:1201px;height:1px;background:linear-gradient(90deg,#a0a0a0 0,#a0a0a0 1024px,#3a3a34 1025px)"></div>

</div></body></html>
